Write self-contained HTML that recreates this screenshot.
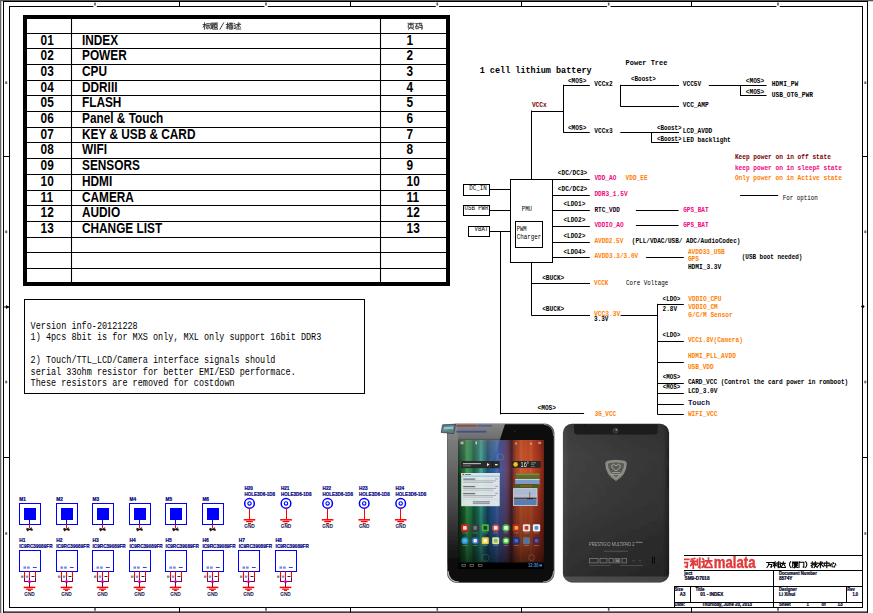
<!DOCTYPE html>
<html><head><meta charset="utf-8"><title>01 - INDEX</title>
<style>html,body{margin:0;padding:0;background:#fff;overflow:hidden}svg{display:block}</style>
</head><body>
<svg width="873" height="613" viewBox="0 0 873 613">
<defs>
<filter id="lblur" x="-5%" y="-20%" width="110%" height="140%"><feGaussianBlur stdDeviation="0.35"/></filter>
<filter id="pblur" x="-5%" y="-5%" width="110%" height="110%"><feGaussianBlur stdDeviation="0.45"/></filter>
<linearGradient id="wall" x1="0" y1="0" x2="1" y2="0">
<stop offset="0" stop-color="#0c2a16"/><stop offset="0.05" stop-color="#16602e"/><stop offset="0.13" stop-color="#2a9a4c"/>
<stop offset="0.2" stop-color="#1a6a50"/><stop offset="0.27" stop-color="#2aa08c"/><stop offset="0.34" stop-color="#1c5a78"/>
<stop offset="0.42" stop-color="#2f64ae"/><stop offset="0.5" stop-color="#4a5a9c"/><stop offset="0.56" stop-color="#6a4a78"/>
<stop offset="0.62" stop-color="#5a2c34"/><stop offset="0.68" stop-color="#b8482a"/><stop offset="0.78" stop-color="#d4582c"/>
<stop offset="0.88" stop-color="#c24426"/><stop offset="0.95" stop-color="#a83420"/><stop offset="1" stop-color="#7a2416"/></linearGradient>
<linearGradient id="walld" x1="0" y1="0" x2="0" y2="1">
<stop offset="0" stop-color="#000" stop-opacity="0.12"/><stop offset="0.25" stop-color="#000" stop-opacity="0.05"/><stop offset="0.6" stop-color="#000" stop-opacity="0.27"/><stop offset="0.85" stop-color="#000" stop-opacity="0.42"/><stop offset="1" stop-color="#000" stop-opacity="0.64"/></linearGradient>
<linearGradient id="glare" x1="0" y1="0" x2="0" y2="1">
<stop offset="0" stop-color="#8c8c8c" stop-opacity="0.95"/><stop offset="0.28" stop-color="#808080" stop-opacity="0.85"/><stop offset="0.34" stop-color="#909090" stop-opacity="0.34"/><stop offset="1" stop-color="#909090" stop-opacity="0.04"/></linearGradient>
<linearGradient id="bezl" x1="0" y1="0" x2="0" y2="1">
<stop offset="0" stop-color="#777"/><stop offset="0.5" stop-color="#555"/><stop offset="1" stop-color="#0b0b0b"/></linearGradient>
<linearGradient id="backg" x1="0" y1="0" x2="1" y2="0">
<stop offset="0" stop-color="#4e4e4e"/><stop offset="0.06" stop-color="#424242"/><stop offset="0.5" stop-color="#3b3b3b"/><stop offset="0.94" stop-color="#363636"/><stop offset="1" stop-color="#262626"/></linearGradient>
<linearGradient id="backv" x1="0" y1="0" x2="0" y2="1">
<stop offset="0" stop-color="#000" stop-opacity="0.12"/><stop offset="0.2" stop-color="#000" stop-opacity="0"/><stop offset="0.5" stop-color="#000" stop-opacity="0.07"/><stop offset="0.75" stop-color="#000" stop-opacity="0.22"/><stop offset="0.96" stop-color="#000" stop-opacity="0.3"/><stop offset="0.975" stop-color="#fff" stop-opacity="0.06"/><stop offset="1" stop-color="#fff" stop-opacity="0.1"/></linearGradient>
<clipPath id="fclip"><rect x="447.5" y="424" width="106.5" height="158.4" rx="9"/></clipPath>
<clipPath id="logoclip"><rect x="684" y="555.8" width="80" height="14"/></clipPath>
</defs>
<rect x="0.00" y="0.00" width="873.00" height="613.00" fill="#fff" stroke="none" stroke-width="1" />
<rect x="0.00" y="0.00" width="873.00" height="1.30" fill="#555" stroke="none" stroke-width="1" />
<rect x="0.00" y="0.00" width="1.30" height="613.00" fill="#666" stroke="none" stroke-width="1" />
<line x1="3.50" y1="1.00" x2="3.50" y2="613.00" stroke="#000" stroke-width="1" />
<line x1="3.20" y1="1.50" x2="868.00" y2="1.50" stroke="#000" stroke-width="1" />
<line x1="867.50" y1="1.00" x2="867.50" y2="613.00" stroke="#000" stroke-width="1" />
<rect x="9.5" y="6.5" width="853" height="601" fill="none" stroke="#000" stroke-width="1"/>
<line x1="3.00" y1="612.10" x2="868.00" y2="612.10" stroke="#000" stroke-width="1.3" />
<line x1="179.50" y1="1.60" x2="179.50" y2="6.30" stroke="#000" stroke-width="1" />
<line x1="179.50" y1="607.50" x2="179.50" y2="612.40" stroke="#000" stroke-width="1" />
<line x1="350.50" y1="1.60" x2="350.50" y2="6.30" stroke="#000" stroke-width="1" />
<line x1="350.50" y1="607.50" x2="350.50" y2="612.40" stroke="#000" stroke-width="1" />
<line x1="521.50" y1="1.60" x2="521.50" y2="6.30" stroke="#000" stroke-width="1" />
<line x1="521.50" y1="607.50" x2="521.50" y2="612.40" stroke="#000" stroke-width="1" />
<line x1="691.50" y1="1.60" x2="691.50" y2="6.30" stroke="#000" stroke-width="1" />
<line x1="691.50" y1="607.50" x2="691.50" y2="612.40" stroke="#000" stroke-width="1" />
<line x1="3.20" y1="156.50" x2="9.30" y2="156.50" stroke="#000" stroke-width="1" />
<line x1="862.70" y1="156.50" x2="867.80" y2="156.50" stroke="#000" stroke-width="1" />
<line x1="3.20" y1="457.50" x2="9.30" y2="457.50" stroke="#000" stroke-width="1" />
<line x1="862.70" y1="457.50" x2="867.80" y2="457.50" stroke="#000" stroke-width="1" />
<rect x="94.20" y="2.60" width="1.60" height="3.20" fill="#556" stroke="none" stroke-width="1" />
<rect x="93.40" y="5.60" width="3.40" height="1.40" fill="#fff" stroke="none" stroke-width="1" />
<rect x="94.20" y="607.80" width="1.60" height="3.00" fill="#556" stroke="none" stroke-width="1" />
<rect x="265.20" y="2.60" width="1.60" height="3.20" fill="#556" stroke="none" stroke-width="1" />
<rect x="264.40" y="5.60" width="3.40" height="1.40" fill="#fff" stroke="none" stroke-width="1" />
<rect x="265.20" y="607.80" width="1.60" height="3.00" fill="#556" stroke="none" stroke-width="1" />
<rect x="436.50" y="2.60" width="1.60" height="3.20" fill="#556" stroke="none" stroke-width="1" />
<rect x="435.70" y="5.60" width="3.40" height="1.40" fill="#fff" stroke="none" stroke-width="1" />
<rect x="436.50" y="607.80" width="1.60" height="3.00" fill="#556" stroke="none" stroke-width="1" />
<rect x="607.90" y="2.60" width="1.60" height="3.20" fill="#556" stroke="none" stroke-width="1" />
<rect x="607.10" y="5.60" width="3.40" height="1.40" fill="#fff" stroke="none" stroke-width="1" />
<rect x="607.90" y="607.80" width="1.60" height="3.00" fill="#556" stroke="none" stroke-width="1" />
<rect x="777.20" y="2.60" width="1.60" height="3.20" fill="#556" stroke="none" stroke-width="1" />
<rect x="776.40" y="5.60" width="3.40" height="1.40" fill="#fff" stroke="none" stroke-width="1" />
<rect x="777.20" y="607.80" width="1.60" height="3.00" fill="#556" stroke="none" stroke-width="1" />
<rect x="5.20" y="81.40" width="2.00" height="2.60" fill="#667" stroke="none" stroke-width="1" />
<rect x="864.30" y="81.40" width="2.00" height="2.60" fill="#667" stroke="none" stroke-width="1" />
<rect x="5.20" y="230.50" width="2.00" height="2.60" fill="#667" stroke="none" stroke-width="1" />
<rect x="864.30" y="230.50" width="2.00" height="2.60" fill="#667" stroke="none" stroke-width="1" />
<rect x="5.20" y="380.70" width="2.00" height="2.60" fill="#667" stroke="none" stroke-width="1" />
<rect x="864.30" y="380.70" width="2.00" height="2.60" fill="#667" stroke="none" stroke-width="1" />
<rect x="5.20" y="532.20" width="2.00" height="2.60" fill="#667" stroke="none" stroke-width="1" />
<rect x="864.30" y="532.20" width="2.00" height="2.60" fill="#667" stroke="none" stroke-width="1" />
<path d="M3.5 307.0 L9 307.0" stroke="#000" stroke-width="1" fill="none"/><path d="M6 305 L9.2 307 L6 309 Z" fill="#000"/>
<path d="M860.9 306.6 l1.9 -1.9 l1.9 1.9 l-1.9 1.9z" fill="#000"/>
<rect x="25.00" y="17.00" width="423.00" height="267.00" fill="none" stroke="#000" stroke-width="4" />
<line x1="26.00" y1="33.50" x2="447.00" y2="33.50" stroke="#000" stroke-width="1.1" />
<line x1="26.00" y1="48.50" x2="447.00" y2="48.50" stroke="#000" stroke-width="1.1" />
<line x1="26.00" y1="64.50" x2="447.00" y2="64.50" stroke="#000" stroke-width="1.1" />
<line x1="26.00" y1="80.50" x2="447.00" y2="80.50" stroke="#000" stroke-width="1.1" />
<line x1="26.00" y1="95.50" x2="447.00" y2="95.50" stroke="#000" stroke-width="1.1" />
<line x1="26.00" y1="111.50" x2="447.00" y2="111.50" stroke="#000" stroke-width="1.1" />
<line x1="26.00" y1="127.50" x2="447.00" y2="127.50" stroke="#000" stroke-width="1.1" />
<line x1="26.00" y1="142.50" x2="447.00" y2="142.50" stroke="#000" stroke-width="1.1" />
<line x1="26.00" y1="158.50" x2="447.00" y2="158.50" stroke="#000" stroke-width="1.1" />
<line x1="26.00" y1="174.50" x2="447.00" y2="174.50" stroke="#000" stroke-width="1.1" />
<line x1="26.00" y1="190.50" x2="447.00" y2="190.50" stroke="#000" stroke-width="1.1" />
<line x1="26.00" y1="205.50" x2="447.00" y2="205.50" stroke="#000" stroke-width="1.1" />
<line x1="26.00" y1="221.50" x2="447.00" y2="221.50" stroke="#000" stroke-width="1.1" />
<line x1="26.00" y1="237.50" x2="447.00" y2="237.50" stroke="#000" stroke-width="1.1" />
<line x1="26.00" y1="252.50" x2="447.00" y2="252.50" stroke="#000" stroke-width="1.1" />
<line x1="26.00" y1="268.50" x2="447.00" y2="268.50" stroke="#000" stroke-width="1.1" />
<line x1="71.50" y1="18.00" x2="71.50" y2="283.00" stroke="#000" stroke-width="1.1" />
<line x1="380.50" y1="18.00" x2="380.50" y2="283.00" stroke="#000" stroke-width="1.1" />
<text transform="translate(40.60,44.80) scale(0.845,1)" style="font-family:'Liberation Sans',sans-serif;font-size:14px;font-weight:bold" fill="#000" text-anchor="start"  xml:space="preserve">01</text>
<text transform="translate(82.00,44.80) scale(0.845,1)" style="font-family:'Liberation Sans',sans-serif;font-size:14px;font-weight:bold" fill="#000" text-anchor="start"  xml:space="preserve">INDEX</text>
<text transform="translate(406.60,44.80) scale(0.845,1)" style="font-family:'Liberation Sans',sans-serif;font-size:14px;font-weight:bold" fill="#000" text-anchor="start"  xml:space="preserve">1</text>
<text transform="translate(40.60,60.47) scale(0.845,1)" style="font-family:'Liberation Sans',sans-serif;font-size:14px;font-weight:bold" fill="#000" text-anchor="start"  xml:space="preserve">02</text>
<text transform="translate(82.00,60.47) scale(0.845,1)" style="font-family:'Liberation Sans',sans-serif;font-size:14px;font-weight:bold" fill="#000" text-anchor="start"  xml:space="preserve">POWER</text>
<text transform="translate(406.60,60.47) scale(0.845,1)" style="font-family:'Liberation Sans',sans-serif;font-size:14px;font-weight:bold" fill="#000" text-anchor="start"  xml:space="preserve">2</text>
<text transform="translate(40.60,76.14) scale(0.845,1)" style="font-family:'Liberation Sans',sans-serif;font-size:14px;font-weight:bold" fill="#000" text-anchor="start"  xml:space="preserve">03</text>
<text transform="translate(82.00,76.14) scale(0.845,1)" style="font-family:'Liberation Sans',sans-serif;font-size:14px;font-weight:bold" fill="#000" text-anchor="start"  xml:space="preserve">CPU</text>
<text transform="translate(406.60,76.14) scale(0.845,1)" style="font-family:'Liberation Sans',sans-serif;font-size:14px;font-weight:bold" fill="#000" text-anchor="start"  xml:space="preserve">3</text>
<text transform="translate(40.60,91.81) scale(0.845,1)" style="font-family:'Liberation Sans',sans-serif;font-size:14px;font-weight:bold" fill="#000" text-anchor="start"  xml:space="preserve">04</text>
<text transform="translate(82.00,91.81) scale(0.845,1)" style="font-family:'Liberation Sans',sans-serif;font-size:14px;font-weight:bold" fill="#000" text-anchor="start"  xml:space="preserve">DDRIII</text>
<text transform="translate(406.60,91.81) scale(0.845,1)" style="font-family:'Liberation Sans',sans-serif;font-size:14px;font-weight:bold" fill="#000" text-anchor="start"  xml:space="preserve">4</text>
<text transform="translate(40.60,107.48) scale(0.845,1)" style="font-family:'Liberation Sans',sans-serif;font-size:14px;font-weight:bold" fill="#000" text-anchor="start"  xml:space="preserve">05</text>
<text transform="translate(82.00,107.48) scale(0.845,1)" style="font-family:'Liberation Sans',sans-serif;font-size:14px;font-weight:bold" fill="#000" text-anchor="start"  xml:space="preserve">FLASH</text>
<text transform="translate(406.60,107.48) scale(0.845,1)" style="font-family:'Liberation Sans',sans-serif;font-size:14px;font-weight:bold" fill="#000" text-anchor="start"  xml:space="preserve">5</text>
<text transform="translate(40.60,123.15) scale(0.845,1)" style="font-family:'Liberation Sans',sans-serif;font-size:14px;font-weight:bold" fill="#000" text-anchor="start"  xml:space="preserve">06</text>
<text transform="translate(82.00,123.15) scale(0.845,1)" style="font-family:'Liberation Sans',sans-serif;font-size:14px;font-weight:bold" fill="#000" text-anchor="start"  xml:space="preserve">Panel &amp; Touch</text>
<text transform="translate(406.60,123.15) scale(0.845,1)" style="font-family:'Liberation Sans',sans-serif;font-size:14px;font-weight:bold" fill="#000" text-anchor="start"  xml:space="preserve">6</text>
<text transform="translate(40.60,138.82) scale(0.845,1)" style="font-family:'Liberation Sans',sans-serif;font-size:14px;font-weight:bold" fill="#000" text-anchor="start"  xml:space="preserve">07</text>
<text transform="translate(82.00,138.82) scale(0.845,1)" style="font-family:'Liberation Sans',sans-serif;font-size:14px;font-weight:bold" fill="#000" text-anchor="start"  xml:space="preserve">KEY &amp; USB &amp; CARD</text>
<text transform="translate(406.60,138.82) scale(0.845,1)" style="font-family:'Liberation Sans',sans-serif;font-size:14px;font-weight:bold" fill="#000" text-anchor="start"  xml:space="preserve">7</text>
<text transform="translate(40.60,154.49) scale(0.845,1)" style="font-family:'Liberation Sans',sans-serif;font-size:14px;font-weight:bold" fill="#000" text-anchor="start"  xml:space="preserve">08</text>
<text transform="translate(82.00,154.49) scale(0.845,1)" style="font-family:'Liberation Sans',sans-serif;font-size:14px;font-weight:bold" fill="#000" text-anchor="start"  xml:space="preserve">WIFI</text>
<text transform="translate(406.60,154.49) scale(0.845,1)" style="font-family:'Liberation Sans',sans-serif;font-size:14px;font-weight:bold" fill="#000" text-anchor="start"  xml:space="preserve">8</text>
<text transform="translate(40.60,170.16) scale(0.845,1)" style="font-family:'Liberation Sans',sans-serif;font-size:14px;font-weight:bold" fill="#000" text-anchor="start"  xml:space="preserve">09</text>
<text transform="translate(82.00,170.16) scale(0.845,1)" style="font-family:'Liberation Sans',sans-serif;font-size:14px;font-weight:bold" fill="#000" text-anchor="start"  xml:space="preserve">SENSORS</text>
<text transform="translate(406.60,170.16) scale(0.845,1)" style="font-family:'Liberation Sans',sans-serif;font-size:14px;font-weight:bold" fill="#000" text-anchor="start"  xml:space="preserve">9</text>
<text transform="translate(40.60,185.83) scale(0.845,1)" style="font-family:'Liberation Sans',sans-serif;font-size:14px;font-weight:bold" fill="#000" text-anchor="start"  xml:space="preserve">10</text>
<text transform="translate(82.00,185.83) scale(0.845,1)" style="font-family:'Liberation Sans',sans-serif;font-size:14px;font-weight:bold" fill="#000" text-anchor="start"  xml:space="preserve">HDMI</text>
<text transform="translate(406.60,185.83) scale(0.845,1)" style="font-family:'Liberation Sans',sans-serif;font-size:14px;font-weight:bold" fill="#000" text-anchor="start"  xml:space="preserve">10</text>
<text transform="translate(40.60,201.50) scale(0.845,1)" style="font-family:'Liberation Sans',sans-serif;font-size:14px;font-weight:bold" fill="#000" text-anchor="start"  xml:space="preserve">11</text>
<text transform="translate(82.00,201.50) scale(0.845,1)" style="font-family:'Liberation Sans',sans-serif;font-size:14px;font-weight:bold" fill="#000" text-anchor="start"  xml:space="preserve">CAMERA</text>
<text transform="translate(406.60,201.50) scale(0.845,1)" style="font-family:'Liberation Sans',sans-serif;font-size:14px;font-weight:bold" fill="#000" text-anchor="start"  xml:space="preserve">11</text>
<text transform="translate(40.60,217.17) scale(0.845,1)" style="font-family:'Liberation Sans',sans-serif;font-size:14px;font-weight:bold" fill="#000" text-anchor="start"  xml:space="preserve">12</text>
<text transform="translate(82.00,217.17) scale(0.845,1)" style="font-family:'Liberation Sans',sans-serif;font-size:14px;font-weight:bold" fill="#000" text-anchor="start"  xml:space="preserve">AUDIO</text>
<text transform="translate(406.60,217.17) scale(0.845,1)" style="font-family:'Liberation Sans',sans-serif;font-size:14px;font-weight:bold" fill="#000" text-anchor="start"  xml:space="preserve">12</text>
<text transform="translate(40.60,232.84) scale(0.845,1)" style="font-family:'Liberation Sans',sans-serif;font-size:14px;font-weight:bold" fill="#000" text-anchor="start"  xml:space="preserve">13</text>
<text transform="translate(82.00,232.84) scale(0.845,1)" style="font-family:'Liberation Sans',sans-serif;font-size:14px;font-weight:bold" fill="#000" text-anchor="start"  xml:space="preserve">CHANGE LIST</text>
<text transform="translate(406.60,232.84) scale(0.845,1)" style="font-family:'Liberation Sans',sans-serif;font-size:14px;font-weight:bold" fill="#000" text-anchor="start"  xml:space="preserve">13</text>
<rect x="24.50" y="299.50" width="340.00" height="94.00" fill="none" stroke="#000" stroke-width="1" />
<text x="30.60" y="329.20" style="font-family:'Liberation Mono',sans-serif;font-size:10px;font-weight:normal" fill="#000" text-anchor="start" textLength="107.10" lengthAdjust="spacingAndGlyphs"  xml:space="preserve">Version info-20121228</text>
<text x="30.60" y="340.30" style="font-family:'Liberation Mono',sans-serif;font-size:10px;font-weight:normal" fill="#000" text-anchor="start" textLength="290.70" lengthAdjust="spacingAndGlyphs"  xml:space="preserve">1) 4pcs 8bit is for MXS only, MXL only support 16bit DDR3</text>
<text x="30.60" y="363.00" style="font-family:'Liberation Mono',sans-serif;font-size:10px;font-weight:normal" fill="#000" text-anchor="start" textLength="244.80" lengthAdjust="spacingAndGlyphs"  xml:space="preserve">2) Touch/TTL_LCD/Camera interface signals should</text>
<text x="30.60" y="374.60" style="font-family:'Liberation Mono',sans-serif;font-size:10px;font-weight:normal" fill="#000" text-anchor="start" textLength="265.20" lengthAdjust="spacingAndGlyphs"  xml:space="preserve">serial 33ohm resistor for better EMI/ESD performace.</text>
<text x="30.60" y="386.40" style="font-family:'Liberation Mono',sans-serif;font-size:10px;font-weight:normal" fill="#000" text-anchor="start" textLength="204.00" lengthAdjust="spacingAndGlyphs"  xml:space="preserve">These resistors are removed for costdown</text>
<text x="479.70" y="72.80" style="font-family:'Liberation Mono',sans-serif;font-size:9.6px;font-weight:bold" fill="#000" text-anchor="start" textLength="111.98" lengthAdjust="spacingAndGlyphs"  xml:space="preserve">1 cell lithium battery</text>
<text x="625.60" y="65.00" style="font-family:'Liberation Mono',sans-serif;font-size:8px;font-weight:bold" fill="#000" text-anchor="start" textLength="41.80" lengthAdjust="spacingAndGlyphs"  xml:space="preserve">Power Tree</text>
<line x1="531.60" y1="111.50" x2="563.30" y2="111.50" stroke="#000" stroke-width="1" />
<line x1="531.50" y1="110.50" x2="531.50" y2="179.50" stroke="#000" stroke-width="1" />
<line x1="563.50" y1="84.80" x2="563.50" y2="132.70" stroke="#000" stroke-width="1" />
<line x1="563.30" y1="85.50" x2="589.80" y2="85.50" stroke="#000" stroke-width="1" />
<line x1="563.30" y1="132.50" x2="589.80" y2="132.50" stroke="#000" stroke-width="1" />
<text x="531.90" y="106.70" style="font-family:'Liberation Mono',sans-serif;font-size:7px;font-weight:bold" fill="#800000" text-anchor="start" textLength="14.76" lengthAdjust="spacingAndGlyphs"  xml:space="preserve">VCCx</text>
<text x="567.90" y="82.90" style="font-family:'Liberation Mono',sans-serif;font-size:7px;font-weight:bold" fill="#000" text-anchor="start" textLength="18.45" lengthAdjust="spacingAndGlyphs"  xml:space="preserve">&lt;MOS&gt;</text>
<text x="594.30" y="85.90" style="font-family:'Liberation Mono',sans-serif;font-size:7px;font-weight:bold" fill="#000" text-anchor="start" textLength="18.45" lengthAdjust="spacingAndGlyphs"  xml:space="preserve">VCCx2</text>
<text x="567.90" y="129.70" style="font-family:'Liberation Mono',sans-serif;font-size:7px;font-weight:bold" fill="#000" text-anchor="start" textLength="18.45" lengthAdjust="spacingAndGlyphs"  xml:space="preserve">&lt;MOS&gt;</text>
<text x="594.30" y="132.90" style="font-family:'Liberation Mono',sans-serif;font-size:7px;font-weight:bold" fill="#000" text-anchor="start" textLength="18.45" lengthAdjust="spacingAndGlyphs"  xml:space="preserve">VCCx3</text>
<line x1="620.50" y1="84.80" x2="620.50" y2="106.50" stroke="#000" stroke-width="1" />
<line x1="620.30" y1="85.50" x2="679.00" y2="85.50" stroke="#000" stroke-width="1" />
<line x1="620.30" y1="106.50" x2="679.00" y2="106.50" stroke="#000" stroke-width="1" />
<text x="631.00" y="80.90" style="font-family:'Liberation Mono',sans-serif;font-size:7px;font-weight:bold" fill="#000" text-anchor="start" textLength="24.85" lengthAdjust="spacingAndGlyphs"  xml:space="preserve">&lt;Boost&gt;</text>
<text x="682.80" y="85.90" style="font-family:'Liberation Mono',sans-serif;font-size:7px;font-weight:bold" fill="#000" text-anchor="start" textLength="18.45" lengthAdjust="spacingAndGlyphs"  xml:space="preserve">VCC5V</text>
<text x="682.80" y="106.70" style="font-family:'Liberation Mono',sans-serif;font-size:7px;font-weight:bold" fill="#000" text-anchor="start" textLength="25.83" lengthAdjust="spacingAndGlyphs"  xml:space="preserve">VCC_AMP</text>
<line x1="708.80" y1="85.50" x2="766.50" y2="85.50" stroke="#000" stroke-width="1" />
<line x1="740.50" y1="85.30" x2="740.50" y2="95.90" stroke="#000" stroke-width="1" />
<line x1="740.30" y1="95.50" x2="766.50" y2="95.50" stroke="#000" stroke-width="1" />
<text x="745.80" y="82.90" style="font-family:'Liberation Mono',sans-serif;font-size:7px;font-weight:bold" fill="#000" text-anchor="start" textLength="18.45" lengthAdjust="spacingAndGlyphs"  xml:space="preserve">&lt;MOS&gt;</text>
<text x="745.80" y="93.50" style="font-family:'Liberation Mono',sans-serif;font-size:7px;font-weight:bold" fill="#000" text-anchor="start" textLength="18.45" lengthAdjust="spacingAndGlyphs"  xml:space="preserve">&lt;MOS&gt;</text>
<text x="771.80" y="85.90" style="font-family:'Liberation Mono',sans-serif;font-size:7px;font-weight:bold" fill="#000" text-anchor="start" textLength="26.46" lengthAdjust="spacingAndGlyphs"  xml:space="preserve">HDMI_PW</text>
<text x="771.80" y="96.90" style="font-family:'Liberation Mono',sans-serif;font-size:7px;font-weight:bold" fill="#000" text-anchor="start" textLength="41.14" lengthAdjust="spacingAndGlyphs"  xml:space="preserve">USB_OTG_PWR</text>
<line x1="620.30" y1="132.50" x2="679.00" y2="132.50" stroke="#000" stroke-width="1" />
<line x1="651.50" y1="132.20" x2="651.50" y2="142.70" stroke="#000" stroke-width="1" />
<line x1="651.40" y1="142.50" x2="679.00" y2="142.50" stroke="#000" stroke-width="1" />
<text x="657.10" y="130.20" style="font-family:'Liberation Mono',sans-serif;font-size:7px;font-weight:bold" fill="#000" text-anchor="start" textLength="24.50" lengthAdjust="spacingAndGlyphs"  xml:space="preserve">&lt;Boost&gt;</text>
<text x="657.10" y="141.00" style="font-family:'Liberation Mono',sans-serif;font-size:7px;font-weight:bold" fill="#000" text-anchor="start" textLength="24.50" lengthAdjust="spacingAndGlyphs"  xml:space="preserve">&lt;Boost&gt;</text>
<text x="682.80" y="132.90" style="font-family:'Liberation Mono',sans-serif;font-size:7px;font-weight:bold" fill="#000" text-anchor="start" textLength="29.52" lengthAdjust="spacingAndGlyphs"  xml:space="preserve">LCD_AVDD</text>
<text x="682.80" y="141.80" style="font-family:'Liberation Mono',sans-serif;font-size:7px;font-weight:bold" fill="#000" text-anchor="start" textLength="47.97" lengthAdjust="spacingAndGlyphs"  xml:space="preserve">LED backlight</text>
<text x="734.90" y="159.20" style="font-family:'Liberation Mono',sans-serif;font-size:7px;font-weight:bold" fill="#800000" text-anchor="start" textLength="95.94" lengthAdjust="spacingAndGlyphs"  xml:space="preserve">Keep power on in off state</text>
<text x="734.90" y="170.20" style="font-family:'Liberation Mono',sans-serif;font-size:7px;font-weight:bold" fill="#f0057d" text-anchor="start" textLength="107.01" lengthAdjust="spacingAndGlyphs"  xml:space="preserve">keep power on in sleep# state</text>
<text x="734.90" y="180.30" style="font-family:'Liberation Mono',sans-serif;font-size:7px;font-weight:bold" fill="#ff8000" text-anchor="start" textLength="107.01" lengthAdjust="spacingAndGlyphs"  xml:space="preserve">Only power on in Active state</text>
<line x1="740.10" y1="195.50" x2="778.10" y2="195.50" stroke="#000" stroke-width="1" />
<text x="782.70" y="200.40" style="font-family:'Liberation Mono',sans-serif;font-size:7px;font-weight:normal" fill="#000" text-anchor="start" textLength="35.20" lengthAdjust="spacingAndGlyphs"  xml:space="preserve">For option</text>
<rect x="510.50" y="179.50" width="42.00" height="83.00" fill="none" stroke="#000" stroke-width="1" />
<rect x="515.50" y="221.50" width="27.00" height="26.00" fill="none" stroke="#000" stroke-width="1" />
<text x="521.80" y="210.50" style="font-family:'Liberation Mono',sans-serif;font-size:6.5px;font-weight:normal" fill="#000" text-anchor="start" textLength="10.20" lengthAdjust="spacingAndGlyphs"  xml:space="preserve">PMU</text>
<text x="516.70" y="231.20" style="font-family:'Liberation Mono',sans-serif;font-size:6.5px;font-weight:normal" fill="#000" text-anchor="start" textLength="9.90" lengthAdjust="spacingAndGlyphs"  xml:space="preserve">PWM</text>
<text x="516.70" y="238.50" style="font-family:'Liberation Mono',sans-serif;font-size:6.5px;font-weight:normal" fill="#000" text-anchor="start" textLength="24.50" lengthAdjust="spacingAndGlyphs"  xml:space="preserve">Charger</text>
<rect x="463.50" y="184.50" width="26.00" height="11.00" fill="none" stroke="#000" stroke-width="1" />
<line x1="489.50" y1="189.50" x2="510.40" y2="189.50" stroke="#000" stroke-width="1" />
<rect x="463.50" y="205.50" width="26.00" height="10.00" fill="none" stroke="#000" stroke-width="1" />
<line x1="489.50" y1="210.50" x2="510.40" y2="210.50" stroke="#000" stroke-width="1" />
<rect x="468.50" y="226.50" width="21.00" height="10.00" fill="none" stroke="#000" stroke-width="1" />
<line x1="489.50" y1="231.50" x2="510.40" y2="231.50" stroke="#000" stroke-width="1" />
<text x="469.30" y="189.60" style="font-family:'Liberation Mono',sans-serif;font-size:6.5px;font-weight:normal" fill="#000" text-anchor="start" textLength="17.50" lengthAdjust="spacingAndGlyphs"  xml:space="preserve">DC_IN</text>
<text x="464.60" y="210.30" style="font-family:'Liberation Mono',sans-serif;font-size:6.5px;font-weight:normal" fill="#000" text-anchor="start" textLength="23.80" lengthAdjust="spacingAndGlyphs"  xml:space="preserve">USB PWR</text>
<text x="474.60" y="231.30" style="font-family:'Liberation Mono',sans-serif;font-size:6.5px;font-weight:normal" fill="#000" text-anchor="start" textLength="13.60" lengthAdjust="spacingAndGlyphs"  xml:space="preserve">VBAT</text>
<line x1="500.50" y1="231.40" x2="500.50" y2="414.40" stroke="#000" stroke-width="1" />
<line x1="500.60" y1="413.50" x2="584.10" y2="413.50" stroke="#000" stroke-width="1" />
<text x="537.50" y="409.50" style="font-family:'Liberation Mono',sans-serif;font-size:7px;font-weight:bold" fill="#000" text-anchor="start" textLength="18.45" lengthAdjust="spacingAndGlyphs"  xml:space="preserve">&lt;MOS&gt;</text>
<text x="594.70" y="415.80" style="font-family:'Liberation Mono',sans-serif;font-size:7px;font-weight:bold" fill="#ff8000" text-anchor="start" textLength="21.30" lengthAdjust="spacingAndGlyphs"  xml:space="preserve">3G_VCC</text>
<line x1="552.50" y1="179.50" x2="589.80" y2="179.50" stroke="#000" stroke-width="1" />
<line x1="552.50" y1="195.50" x2="589.80" y2="195.50" stroke="#000" stroke-width="1" />
<line x1="552.50" y1="210.50" x2="589.80" y2="210.50" stroke="#000" stroke-width="1" />
<line x1="552.50" y1="226.50" x2="589.80" y2="226.50" stroke="#000" stroke-width="1" />
<line x1="552.50" y1="242.50" x2="589.80" y2="242.50" stroke="#000" stroke-width="1" />
<line x1="552.50" y1="257.50" x2="589.80" y2="257.50" stroke="#000" stroke-width="1" />
<text x="557.80" y="175.00" style="font-family:'Liberation Mono',sans-serif;font-size:7px;font-weight:bold" fill="#000" text-anchor="start" textLength="29.52" lengthAdjust="spacingAndGlyphs"  xml:space="preserve">&lt;DC/DC3&gt;</text>
<text x="557.80" y="190.90" style="font-family:'Liberation Mono',sans-serif;font-size:7px;font-weight:bold" fill="#000" text-anchor="start" textLength="29.52" lengthAdjust="spacingAndGlyphs"  xml:space="preserve">&lt;DC/DC2&gt;</text>
<text x="563.40" y="206.00" style="font-family:'Liberation Mono',sans-serif;font-size:7px;font-weight:bold" fill="#000" text-anchor="start" textLength="21.90" lengthAdjust="spacingAndGlyphs"  xml:space="preserve">&lt;LDO1&gt;</text>
<text x="563.40" y="221.60" style="font-family:'Liberation Mono',sans-serif;font-size:7px;font-weight:bold" fill="#000" text-anchor="start" textLength="21.90" lengthAdjust="spacingAndGlyphs"  xml:space="preserve">&lt;LDO2&gt;</text>
<text x="563.40" y="237.50" style="font-family:'Liberation Mono',sans-serif;font-size:7px;font-weight:bold" fill="#000" text-anchor="start" textLength="21.90" lengthAdjust="spacingAndGlyphs"  xml:space="preserve">&lt;LDO2&gt;</text>
<text x="563.40" y="253.60" style="font-family:'Liberation Mono',sans-serif;font-size:7px;font-weight:bold" fill="#000" text-anchor="start" textLength="21.90" lengthAdjust="spacingAndGlyphs"  xml:space="preserve">&lt;LDO4&gt;</text>
<text x="594.40" y="180.00" style="font-family:'Liberation Mono',sans-serif;font-size:7px;font-weight:bold" fill="#f0057d" text-anchor="start" textLength="21.90" lengthAdjust="spacingAndGlyphs"  xml:space="preserve">VDD_AO</text>
<text x="625.60" y="180.00" style="font-family:'Liberation Mono',sans-serif;font-size:7px;font-weight:bold" fill="#ff8000" text-anchor="start" textLength="22.14" lengthAdjust="spacingAndGlyphs"  xml:space="preserve">VDD_EE</text>
<text x="594.40" y="196.20" style="font-family:'Liberation Mono',sans-serif;font-size:7px;font-weight:bold" fill="#f0057d" text-anchor="start" textLength="33.21" lengthAdjust="spacingAndGlyphs"  xml:space="preserve">DDR3_1.5V</text>
<text x="594.40" y="212.00" style="font-family:'Liberation Mono',sans-serif;font-size:7px;font-weight:bold" fill="#200020" text-anchor="start" textLength="25.62" lengthAdjust="spacingAndGlyphs"  xml:space="preserve">RTC_VDD</text>
<text x="594.40" y="226.90" style="font-family:'Liberation Mono',sans-serif;font-size:7px;font-weight:bold" fill="#f0057d" text-anchor="start" textLength="29.28" lengthAdjust="spacingAndGlyphs"  xml:space="preserve">VDDIO_AO</text>
<text x="594.40" y="243.00" style="font-family:'Liberation Mono',sans-serif;font-size:7px;font-weight:bold" fill="#ff8000" text-anchor="start" textLength="28.96" lengthAdjust="spacingAndGlyphs"  xml:space="preserve">AVDD2.5V</text>
<text x="594.40" y="258.40" style="font-family:'Liberation Mono',sans-serif;font-size:7px;font-weight:bold" fill="#ff8000" text-anchor="start" textLength="43.80" lengthAdjust="spacingAndGlyphs"  xml:space="preserve">AVDD3.3/3.0V</text>
<line x1="635.90" y1="210.50" x2="678.60" y2="210.50" stroke="#000" stroke-width="1" />
<line x1="635.90" y1="225.50" x2="678.60" y2="225.50" stroke="#000" stroke-width="1" />
<text x="683.20" y="211.70" style="font-family:'Liberation Mono',sans-serif;font-size:7px;font-weight:bold" fill="#f0057d" text-anchor="start" textLength="25.34" lengthAdjust="spacingAndGlyphs"  xml:space="preserve">GPS_BAT</text>
<text x="683.20" y="226.80" style="font-family:'Liberation Mono',sans-serif;font-size:7px;font-weight:bold" fill="#f0057d" text-anchor="start" textLength="25.34" lengthAdjust="spacingAndGlyphs"  xml:space="preserve">GPS_BAT</text>
<text x="631.80" y="242.70" style="font-family:'Liberation Mono',sans-serif;font-size:7px;font-weight:bold" fill="#000" text-anchor="start" textLength="108.60" lengthAdjust="spacingAndGlyphs"  xml:space="preserve">(PLL/VDAC/USB/ ADC/AudioCodec)</text>
<line x1="646.10" y1="257.50" x2="683.80" y2="257.50" stroke="#000" stroke-width="1" />
<text x="687.90" y="254.00" style="font-family:'Liberation Mono',sans-serif;font-size:7px;font-weight:bold" fill="#ff8000" text-anchor="start" textLength="36.90" lengthAdjust="spacingAndGlyphs"  xml:space="preserve">AVDD33_USB</text>
<text x="687.90" y="261.40" style="font-family:'Liberation Mono',sans-serif;font-size:7px;font-weight:bold" fill="#ff8000" text-anchor="start" textLength="11.07" lengthAdjust="spacingAndGlyphs"  xml:space="preserve">GPS</text>
<text x="687.90" y="269.10" style="font-family:'Liberation Mono',sans-serif;font-size:7px;font-weight:bold" fill="#000" text-anchor="start" textLength="33.30" lengthAdjust="spacingAndGlyphs"  xml:space="preserve">HDMI_3.3V</text>
<text x="741.80" y="258.70" style="font-family:'Liberation Mono',sans-serif;font-size:7px;font-weight:bold" fill="#000" text-anchor="start" textLength="60.52" lengthAdjust="spacingAndGlyphs"  xml:space="preserve">(USB boot needed)</text>
<line x1="531.50" y1="262.20" x2="531.50" y2="315.70" stroke="#000" stroke-width="1" />
<line x1="531.60" y1="283.50" x2="590.00" y2="283.50" stroke="#000" stroke-width="1" />
<line x1="531.60" y1="315.50" x2="590.00" y2="315.50" stroke="#000" stroke-width="1" />
<text x="542.20" y="280.00" style="font-family:'Liberation Mono',sans-serif;font-size:7px;font-weight:bold" fill="#000" text-anchor="start" textLength="22.08" lengthAdjust="spacingAndGlyphs"  xml:space="preserve">&lt;BUCK&gt;</text>
<text x="542.20" y="310.70" style="font-family:'Liberation Mono',sans-serif;font-size:7px;font-weight:bold" fill="#000" text-anchor="start" textLength="22.08" lengthAdjust="spacingAndGlyphs"  xml:space="preserve">&lt;BUCK&gt;</text>
<text x="594.10" y="284.50" style="font-family:'Liberation Mono',sans-serif;font-size:7px;font-weight:bold" fill="#ff8000" text-anchor="start" textLength="14.32" lengthAdjust="spacingAndGlyphs"  xml:space="preserve">VCCK</text>
<text x="626.10" y="284.50" style="font-family:'Liberation Mono',sans-serif;font-size:6.5px;font-weight:normal" fill="#000" text-anchor="start" textLength="42.24" lengthAdjust="spacingAndGlyphs"  xml:space="preserve">Core Voltage</text>
<text x="594.10" y="315.60" style="font-family:'Liberation Mono',sans-serif;font-size:7px;font-weight:bold" fill="#ff8000" text-anchor="start" textLength="26.18" lengthAdjust="spacingAndGlyphs"  xml:space="preserve">VCC3.3V</text>
<text x="594.10" y="320.50" style="font-family:'Liberation Mono',sans-serif;font-size:6.5px;font-weight:bold" fill="#000" text-anchor="start" textLength="14.32" lengthAdjust="spacingAndGlyphs"  xml:space="preserve">3.3V</text>
<line x1="620.60" y1="315.50" x2="657.60" y2="315.50" stroke="#000" stroke-width="1" />
<line x1="657.50" y1="303.90" x2="657.50" y2="414.50" stroke="#000" stroke-width="1" />
<line x1="657.60" y1="304.50" x2="683.80" y2="304.50" stroke="#000" stroke-width="1" />
<line x1="657.60" y1="341.50" x2="683.80" y2="341.50" stroke="#000" stroke-width="1" />
<line x1="657.60" y1="362.50" x2="683.80" y2="362.50" stroke="#000" stroke-width="1" />
<line x1="657.60" y1="383.50" x2="683.80" y2="383.50" stroke="#000" stroke-width="1" />
<line x1="657.60" y1="393.50" x2="683.80" y2="393.50" stroke="#000" stroke-width="1" />
<line x1="657.60" y1="404.50" x2="683.80" y2="404.50" stroke="#000" stroke-width="1" />
<line x1="657.60" y1="414.50" x2="683.80" y2="414.50" stroke="#000" stroke-width="1" />
<text x="662.60" y="300.90" style="font-family:'Liberation Mono',sans-serif;font-size:7px;font-weight:bold" fill="#000" text-anchor="start" textLength="17.75" lengthAdjust="spacingAndGlyphs"  xml:space="preserve">&lt;LDO&gt;</text>
<text x="662.60" y="310.70" style="font-family:'Liberation Mono',sans-serif;font-size:6.5px;font-weight:bold" fill="#000" text-anchor="start" textLength="14.40" lengthAdjust="spacingAndGlyphs"  xml:space="preserve">2.8V</text>
<text x="688.30" y="300.90" style="font-family:'Liberation Mono',sans-serif;font-size:7px;font-weight:bold" fill="#ff8000" text-anchor="start" textLength="33.21" lengthAdjust="spacingAndGlyphs"  xml:space="preserve">VDDIO_CPU</text>
<text x="688.30" y="309.00" style="font-family:'Liberation Mono',sans-serif;font-size:7px;font-weight:bold" fill="#ff8000" text-anchor="start" textLength="29.52" lengthAdjust="spacingAndGlyphs"  xml:space="preserve">VDDIO_CM</text>
<text x="688.30" y="317.00" style="font-family:'Liberation Mono',sans-serif;font-size:7px;font-weight:bold" fill="#ff8000" text-anchor="start" textLength="44.28" lengthAdjust="spacingAndGlyphs"  xml:space="preserve">G/C/M Sensor</text>
<text x="662.60" y="336.90" style="font-family:'Liberation Mono',sans-serif;font-size:7px;font-weight:bold" fill="#000" text-anchor="start" textLength="17.75" lengthAdjust="spacingAndGlyphs"  xml:space="preserve">&lt;LDO&gt;</text>
<text x="687.90" y="341.90" style="font-family:'Liberation Mono',sans-serif;font-size:7px;font-weight:bold" fill="#ff8000" text-anchor="start" textLength="54.90" lengthAdjust="spacingAndGlyphs"  xml:space="preserve">VCC1.8V(Camera)</text>
<text x="687.90" y="357.80" style="font-family:'Liberation Mono',sans-serif;font-size:7px;font-weight:bold" fill="#ff8000" text-anchor="start" textLength="47.97" lengthAdjust="spacingAndGlyphs"  xml:space="preserve">HDMI_PLL_AVDD</text>
<text x="687.90" y="368.60" style="font-family:'Liberation Mono',sans-serif;font-size:7px;font-weight:bold" fill="#ff8000" text-anchor="start" textLength="25.83" lengthAdjust="spacingAndGlyphs"  xml:space="preserve">USB_VDD</text>
<text x="662.70" y="378.70" style="font-family:'Liberation Mono',sans-serif;font-size:7px;font-weight:bold" fill="#000" text-anchor="start" textLength="17.60" lengthAdjust="spacingAndGlyphs"  xml:space="preserve">&lt;MOS&gt;</text>
<text x="662.70" y="388.50" style="font-family:'Liberation Mono',sans-serif;font-size:7px;font-weight:bold" fill="#000" text-anchor="start" textLength="17.60" lengthAdjust="spacingAndGlyphs"  xml:space="preserve">&lt;MOS&gt;</text>
<text x="687.90" y="383.80" style="font-family:'Liberation Mono',sans-serif;font-size:7px;font-weight:bold" fill="#000" text-anchor="start" textLength="160.29" lengthAdjust="spacingAndGlyphs"  xml:space="preserve">CARD_VCC (Control the card power in romboot)</text>
<text x="687.90" y="392.80" style="font-family:'Liberation Mono',sans-serif;font-size:7px;font-weight:bold" fill="#000" text-anchor="start" textLength="29.60" lengthAdjust="spacingAndGlyphs"  xml:space="preserve">LCD_3.0V</text>
<text x="687.90" y="404.90" style="font-family:'Liberation Mono',sans-serif;font-size:7.5px;font-weight:bold" fill="#101040" text-anchor="start" textLength="22.00" lengthAdjust="spacingAndGlyphs"  xml:space="preserve">Touch</text>
<text x="687.90" y="415.80" style="font-family:'Liberation Mono',sans-serif;font-size:7px;font-weight:bold" fill="#ff8000" text-anchor="start" textLength="29.60" lengthAdjust="spacingAndGlyphs"  xml:space="preserve">WIFI_VCC</text>
<text x="19.30" y="501.10" style="font-family:'Liberation Sans',sans-serif;font-size:5.2px;font-weight:bold" fill="#000080" text-anchor="start" textLength="6.60" lengthAdjust="spacingAndGlyphs" stroke="#000080" stroke-width="0.2" xml:space="preserve">M1</text>
<rect x="19.50" y="503.50" width="21.00" height="21.00" fill="none" stroke="#0000ff" stroke-width="1" />
<rect x="24.00" y="508.00" width="12.00" height="12.00" fill="#0000ff" stroke="none" stroke-width="1" />
<line x1="29.50" y1="520.00" x2="29.50" y2="524.50" stroke="#0000ff" stroke-width="1" />
<line x1="29.50" y1="524.50" x2="29.50" y2="528.00" stroke="#ff0000" stroke-width="1" />
<path d="M26.50 528.20 L32.50 530.60 M32.10 527.80 L26.90 531.00 M26.30 529.4 L32.70 529.4" stroke="#2a1408" stroke-width="1.05" fill="none"/>
<text x="56.30" y="501.10" style="font-family:'Liberation Sans',sans-serif;font-size:5.2px;font-weight:bold" fill="#000080" text-anchor="start" textLength="6.60" lengthAdjust="spacingAndGlyphs" stroke="#000080" stroke-width="0.2" xml:space="preserve">M2</text>
<rect x="56.50" y="503.50" width="21.00" height="21.00" fill="none" stroke="#0000ff" stroke-width="1" />
<rect x="61.00" y="508.00" width="12.00" height="12.00" fill="#0000ff" stroke="none" stroke-width="1" />
<line x1="66.50" y1="520.00" x2="66.50" y2="524.50" stroke="#0000ff" stroke-width="1" />
<line x1="66.50" y1="524.50" x2="66.50" y2="528.00" stroke="#ff0000" stroke-width="1" />
<path d="M63.50 528.20 L69.50 530.60 M69.10 527.80 L63.90 531.00 M63.30 529.4 L69.70 529.4" stroke="#2a1408" stroke-width="1.05" fill="none"/>
<text x="92.50" y="501.10" style="font-family:'Liberation Sans',sans-serif;font-size:5.2px;font-weight:bold" fill="#000080" text-anchor="start" textLength="6.60" lengthAdjust="spacingAndGlyphs" stroke="#000080" stroke-width="0.2" xml:space="preserve">M3</text>
<rect x="92.50" y="503.50" width="21.00" height="21.00" fill="none" stroke="#0000ff" stroke-width="1" />
<rect x="97.00" y="508.00" width="12.00" height="12.00" fill="#0000ff" stroke="none" stroke-width="1" />
<line x1="102.50" y1="520.00" x2="102.50" y2="524.50" stroke="#0000ff" stroke-width="1" />
<line x1="102.50" y1="524.50" x2="102.50" y2="528.00" stroke="#ff0000" stroke-width="1" />
<path d="M99.50 528.20 L105.50 530.60 M105.10 527.80 L99.90 531.00 M99.30 529.4 L105.70 529.4" stroke="#2a1408" stroke-width="1.05" fill="none"/>
<text x="129.50" y="501.10" style="font-family:'Liberation Sans',sans-serif;font-size:5.2px;font-weight:bold" fill="#000080" text-anchor="start" textLength="6.60" lengthAdjust="spacingAndGlyphs" stroke="#000080" stroke-width="0.2" xml:space="preserve">M4</text>
<rect x="129.50" y="503.50" width="21.00" height="21.00" fill="none" stroke="#0000ff" stroke-width="1" />
<rect x="134.00" y="508.00" width="12.00" height="12.00" fill="#0000ff" stroke="none" stroke-width="1" />
<line x1="139.50" y1="520.00" x2="139.50" y2="524.50" stroke="#0000ff" stroke-width="1" />
<line x1="139.50" y1="524.50" x2="139.50" y2="528.00" stroke="#ff0000" stroke-width="1" />
<path d="M136.50 528.20 L142.50 530.60 M142.10 527.80 L136.90 531.00 M136.30 529.4 L142.70 529.4" stroke="#2a1408" stroke-width="1.05" fill="none"/>
<text x="165.60" y="501.10" style="font-family:'Liberation Sans',sans-serif;font-size:5.2px;font-weight:bold" fill="#000080" text-anchor="start" textLength="6.60" lengthAdjust="spacingAndGlyphs" stroke="#000080" stroke-width="0.2" xml:space="preserve">M5</text>
<rect x="165.50" y="503.50" width="21.00" height="21.00" fill="none" stroke="#0000ff" stroke-width="1" />
<rect x="170.00" y="508.00" width="12.00" height="12.00" fill="#0000ff" stroke="none" stroke-width="1" />
<line x1="175.50" y1="520.00" x2="175.50" y2="524.50" stroke="#0000ff" stroke-width="1" />
<line x1="175.50" y1="524.50" x2="175.50" y2="528.00" stroke="#ff0000" stroke-width="1" />
<path d="M172.50 528.20 L178.50 530.60 M178.10 527.80 L172.90 531.00 M172.30 529.4 L178.70 529.4" stroke="#2a1408" stroke-width="1.05" fill="none"/>
<text x="202.40" y="501.10" style="font-family:'Liberation Sans',sans-serif;font-size:5.2px;font-weight:bold" fill="#000080" text-anchor="start" textLength="6.60" lengthAdjust="spacingAndGlyphs" stroke="#000080" stroke-width="0.2" xml:space="preserve">M6</text>
<rect x="202.50" y="503.50" width="21.00" height="21.00" fill="none" stroke="#0000ff" stroke-width="1" />
<rect x="207.00" y="508.00" width="12.00" height="12.00" fill="#0000ff" stroke="none" stroke-width="1" />
<line x1="212.50" y1="520.00" x2="212.50" y2="524.50" stroke="#0000ff" stroke-width="1" />
<line x1="212.50" y1="524.50" x2="212.50" y2="528.00" stroke="#ff0000" stroke-width="1" />
<path d="M209.50 528.20 L215.50 530.60 M215.10 527.80 L209.90 531.00 M209.30 529.4 L215.70 529.4" stroke="#2a1408" stroke-width="1.05" fill="none"/>
<text x="19.30" y="541.90" style="font-family:'Liberation Sans',sans-serif;font-size:5.2px;font-weight:bold" fill="#000080" text-anchor="start" textLength="6.20" lengthAdjust="spacingAndGlyphs" stroke="#000080" stroke-width="0.2" xml:space="preserve">H1</text>
<text x="19.30" y="547.90" style="font-family:'Liberation Sans',sans-serif;font-size:5.2px;font-weight:bold" fill="#000080" text-anchor="start" textLength="33.20" lengthAdjust="spacingAndGlyphs" stroke="#000080" stroke-width="0.2" xml:space="preserve">IC9RC39089FR</text>
<rect x="19.50" y="550.50" width="21.00" height="21.00" fill="none" stroke="#0000ff" stroke-width="1" />
<rect x="23.50" y="566.50" width="2.60" height="2.20" fill="#4a5ad0" stroke="none" stroke-width="1" opacity="0.75"/>
<rect x="27.10" y="566.50" width="2.60" height="2.20" fill="#4a5ad0" stroke="none" stroke-width="1" opacity="0.75"/>
<line x1="32.90" y1="567.50" x2="36.70" y2="567.50" stroke="#2030a0" stroke-width="0.9" />
<line x1="24.50" y1="571.40" x2="24.50" y2="577.20" stroke="#ff0000" stroke-width="1.1" />
<line x1="24.50" y1="577.20" x2="24.50" y2="581.90" stroke="#800040" stroke-width="1" />
<line x1="29.50" y1="571.40" x2="29.50" y2="577.20" stroke="#ff0000" stroke-width="1.1" />
<line x1="29.50" y1="577.20" x2="29.50" y2="581.90" stroke="#800040" stroke-width="1" />
<line x1="35.50" y1="571.40" x2="35.50" y2="577.20" stroke="#ff0000" stroke-width="1.1" />
<line x1="35.50" y1="577.20" x2="35.50" y2="581.90" stroke="#800040" stroke-width="1" />
<rect x="20.90" y="575.60" width="2.60" height="2.20" fill="#7a6a50" stroke="none" stroke-width="1" opacity="0.8"/>
<rect x="25.80" y="575.60" width="2.50" height="2.20" fill="#4a5ad0" stroke="none" stroke-width="1" opacity="0.7"/>
<line x1="31.50" y1="576.50" x2="34.50" y2="576.50" stroke="#101010" stroke-width="0.9" />
<line x1="24.60" y1="581.50" x2="35.30" y2="581.50" stroke="#800040" stroke-width="1" />
<circle cx="29.50" cy="581.6" r="1.5" fill="#ff00ff"/>
<line x1="29.50" y1="581.40" x2="29.50" y2="587.20" stroke="#800040" stroke-width="1" />
<line x1="23.70" y1="587.40" x2="35.30" y2="587.40" stroke="#ff0000" stroke-width="1.5" />
<line x1="26.10" y1="589.20" x2="32.90" y2="589.20" stroke="#ff0000" stroke-width="1.2" />
<line x1="28.00" y1="590.50" x2="31.00" y2="590.50" stroke="#ff0000" stroke-width="1.0" />
<text x="29.50" y="595.60" style="font-family:'Liberation Sans',sans-serif;font-size:5.2px;font-weight:bold" fill="#141450" text-anchor="middle" textLength="10.60" lengthAdjust="spacingAndGlyphs"  xml:space="preserve">GND</text>
<text x="56.30" y="541.90" style="font-family:'Liberation Sans',sans-serif;font-size:5.2px;font-weight:bold" fill="#000080" text-anchor="start" textLength="6.20" lengthAdjust="spacingAndGlyphs" stroke="#000080" stroke-width="0.2" xml:space="preserve">H2</text>
<text x="56.30" y="547.90" style="font-family:'Liberation Sans',sans-serif;font-size:5.2px;font-weight:bold" fill="#000080" text-anchor="start" textLength="33.20" lengthAdjust="spacingAndGlyphs" stroke="#000080" stroke-width="0.2" xml:space="preserve">IC9RC39089FR</text>
<rect x="56.50" y="550.50" width="21.00" height="21.00" fill="none" stroke="#0000ff" stroke-width="1" />
<rect x="60.50" y="566.50" width="2.60" height="2.20" fill="#4a5ad0" stroke="none" stroke-width="1" opacity="0.75"/>
<rect x="64.10" y="566.50" width="2.60" height="2.20" fill="#4a5ad0" stroke="none" stroke-width="1" opacity="0.75"/>
<line x1="69.90" y1="567.50" x2="73.70" y2="567.50" stroke="#2030a0" stroke-width="0.9" />
<line x1="61.50" y1="571.40" x2="61.50" y2="577.20" stroke="#ff0000" stroke-width="1.1" />
<line x1="61.50" y1="577.20" x2="61.50" y2="581.90" stroke="#800040" stroke-width="1" />
<line x1="66.50" y1="571.40" x2="66.50" y2="577.20" stroke="#ff0000" stroke-width="1.1" />
<line x1="66.50" y1="577.20" x2="66.50" y2="581.90" stroke="#800040" stroke-width="1" />
<line x1="72.50" y1="571.40" x2="72.50" y2="577.20" stroke="#ff0000" stroke-width="1.1" />
<line x1="72.50" y1="577.20" x2="72.50" y2="581.90" stroke="#800040" stroke-width="1" />
<rect x="57.90" y="575.60" width="2.60" height="2.20" fill="#7a6a50" stroke="none" stroke-width="1" opacity="0.8"/>
<rect x="62.80" y="575.60" width="2.50" height="2.20" fill="#4a5ad0" stroke="none" stroke-width="1" opacity="0.7"/>
<line x1="68.50" y1="576.50" x2="71.50" y2="576.50" stroke="#101010" stroke-width="0.9" />
<line x1="61.60" y1="581.50" x2="72.30" y2="581.50" stroke="#800040" stroke-width="1" />
<circle cx="66.50" cy="581.6" r="1.5" fill="#ff00ff"/>
<line x1="66.50" y1="581.40" x2="66.50" y2="587.20" stroke="#800040" stroke-width="1" />
<line x1="60.70" y1="587.40" x2="72.30" y2="587.40" stroke="#ff0000" stroke-width="1.5" />
<line x1="63.10" y1="589.20" x2="69.90" y2="589.20" stroke="#ff0000" stroke-width="1.2" />
<line x1="65.00" y1="590.50" x2="68.00" y2="590.50" stroke="#ff0000" stroke-width="1.0" />
<text x="66.50" y="595.60" style="font-family:'Liberation Sans',sans-serif;font-size:5.2px;font-weight:bold" fill="#141450" text-anchor="middle" textLength="10.60" lengthAdjust="spacingAndGlyphs"  xml:space="preserve">GND</text>
<text x="92.50" y="541.90" style="font-family:'Liberation Sans',sans-serif;font-size:5.2px;font-weight:bold" fill="#000080" text-anchor="start" textLength="6.20" lengthAdjust="spacingAndGlyphs" stroke="#000080" stroke-width="0.2" xml:space="preserve">H3</text>
<text x="92.50" y="547.90" style="font-family:'Liberation Sans',sans-serif;font-size:5.2px;font-weight:bold" fill="#000080" text-anchor="start" textLength="33.20" lengthAdjust="spacingAndGlyphs" stroke="#000080" stroke-width="0.2" xml:space="preserve">IC9RC39089FR</text>
<rect x="92.50" y="550.50" width="21.00" height="21.00" fill="none" stroke="#0000ff" stroke-width="1" />
<rect x="96.50" y="566.50" width="2.60" height="2.20" fill="#4a5ad0" stroke="none" stroke-width="1" opacity="0.75"/>
<rect x="100.10" y="566.50" width="2.60" height="2.20" fill="#4a5ad0" stroke="none" stroke-width="1" opacity="0.75"/>
<line x1="105.90" y1="567.50" x2="109.70" y2="567.50" stroke="#2030a0" stroke-width="0.9" />
<line x1="97.50" y1="571.40" x2="97.50" y2="577.20" stroke="#ff0000" stroke-width="1.1" />
<line x1="97.50" y1="577.20" x2="97.50" y2="581.90" stroke="#800040" stroke-width="1" />
<line x1="102.50" y1="571.40" x2="102.50" y2="577.20" stroke="#ff0000" stroke-width="1.1" />
<line x1="102.50" y1="577.20" x2="102.50" y2="581.90" stroke="#800040" stroke-width="1" />
<line x1="108.50" y1="571.40" x2="108.50" y2="577.20" stroke="#ff0000" stroke-width="1.1" />
<line x1="108.50" y1="577.20" x2="108.50" y2="581.90" stroke="#800040" stroke-width="1" />
<rect x="93.90" y="575.60" width="2.60" height="2.20" fill="#7a6a50" stroke="none" stroke-width="1" opacity="0.8"/>
<rect x="98.80" y="575.60" width="2.50" height="2.20" fill="#4a5ad0" stroke="none" stroke-width="1" opacity="0.7"/>
<line x1="104.50" y1="576.50" x2="107.50" y2="576.50" stroke="#101010" stroke-width="0.9" />
<line x1="97.60" y1="581.50" x2="108.30" y2="581.50" stroke="#800040" stroke-width="1" />
<circle cx="102.50" cy="581.6" r="1.5" fill="#ff00ff"/>
<line x1="102.50" y1="581.40" x2="102.50" y2="587.20" stroke="#800040" stroke-width="1" />
<line x1="96.70" y1="587.40" x2="108.30" y2="587.40" stroke="#ff0000" stroke-width="1.5" />
<line x1="99.10" y1="589.20" x2="105.90" y2="589.20" stroke="#ff0000" stroke-width="1.2" />
<line x1="101.00" y1="590.50" x2="104.00" y2="590.50" stroke="#ff0000" stroke-width="1.0" />
<text x="102.50" y="595.60" style="font-family:'Liberation Sans',sans-serif;font-size:5.2px;font-weight:bold" fill="#141450" text-anchor="middle" textLength="10.60" lengthAdjust="spacingAndGlyphs"  xml:space="preserve">GND</text>
<text x="129.50" y="541.90" style="font-family:'Liberation Sans',sans-serif;font-size:5.2px;font-weight:bold" fill="#000080" text-anchor="start" textLength="6.20" lengthAdjust="spacingAndGlyphs" stroke="#000080" stroke-width="0.2" xml:space="preserve">H4</text>
<text x="129.50" y="547.90" style="font-family:'Liberation Sans',sans-serif;font-size:5.2px;font-weight:bold" fill="#000080" text-anchor="start" textLength="33.20" lengthAdjust="spacingAndGlyphs" stroke="#000080" stroke-width="0.2" xml:space="preserve">IC9RC39089FR</text>
<rect x="129.50" y="550.50" width="21.00" height="21.00" fill="none" stroke="#0000ff" stroke-width="1" />
<rect x="133.50" y="566.50" width="2.60" height="2.20" fill="#4a5ad0" stroke="none" stroke-width="1" opacity="0.75"/>
<rect x="137.10" y="566.50" width="2.60" height="2.20" fill="#4a5ad0" stroke="none" stroke-width="1" opacity="0.75"/>
<line x1="142.90" y1="567.50" x2="146.70" y2="567.50" stroke="#2030a0" stroke-width="0.9" />
<line x1="134.50" y1="571.40" x2="134.50" y2="577.20" stroke="#ff0000" stroke-width="1.1" />
<line x1="134.50" y1="577.20" x2="134.50" y2="581.90" stroke="#800040" stroke-width="1" />
<line x1="139.50" y1="571.40" x2="139.50" y2="577.20" stroke="#ff0000" stroke-width="1.1" />
<line x1="139.50" y1="577.20" x2="139.50" y2="581.90" stroke="#800040" stroke-width="1" />
<line x1="145.50" y1="571.40" x2="145.50" y2="577.20" stroke="#ff0000" stroke-width="1.1" />
<line x1="145.50" y1="577.20" x2="145.50" y2="581.90" stroke="#800040" stroke-width="1" />
<rect x="130.90" y="575.60" width="2.60" height="2.20" fill="#7a6a50" stroke="none" stroke-width="1" opacity="0.8"/>
<rect x="135.80" y="575.60" width="2.50" height="2.20" fill="#4a5ad0" stroke="none" stroke-width="1" opacity="0.7"/>
<line x1="141.50" y1="576.50" x2="144.50" y2="576.50" stroke="#101010" stroke-width="0.9" />
<line x1="134.60" y1="581.50" x2="145.30" y2="581.50" stroke="#800040" stroke-width="1" />
<circle cx="139.50" cy="581.6" r="1.5" fill="#ff00ff"/>
<line x1="139.50" y1="581.40" x2="139.50" y2="587.20" stroke="#800040" stroke-width="1" />
<line x1="133.70" y1="587.40" x2="145.30" y2="587.40" stroke="#ff0000" stroke-width="1.5" />
<line x1="136.10" y1="589.20" x2="142.90" y2="589.20" stroke="#ff0000" stroke-width="1.2" />
<line x1="138.00" y1="590.50" x2="141.00" y2="590.50" stroke="#ff0000" stroke-width="1.0" />
<text x="139.50" y="595.60" style="font-family:'Liberation Sans',sans-serif;font-size:5.2px;font-weight:bold" fill="#141450" text-anchor="middle" textLength="10.60" lengthAdjust="spacingAndGlyphs"  xml:space="preserve">GND</text>
<text x="165.60" y="541.90" style="font-family:'Liberation Sans',sans-serif;font-size:5.2px;font-weight:bold" fill="#000080" text-anchor="start" textLength="6.20" lengthAdjust="spacingAndGlyphs" stroke="#000080" stroke-width="0.2" xml:space="preserve">H5</text>
<text x="165.60" y="547.90" style="font-family:'Liberation Sans',sans-serif;font-size:5.2px;font-weight:bold" fill="#000080" text-anchor="start" textLength="33.20" lengthAdjust="spacingAndGlyphs" stroke="#000080" stroke-width="0.2" xml:space="preserve">IC9RC39089FR</text>
<rect x="165.50" y="550.50" width="21.00" height="21.00" fill="none" stroke="#0000ff" stroke-width="1" />
<rect x="169.50" y="566.50" width="2.60" height="2.20" fill="#4a5ad0" stroke="none" stroke-width="1" opacity="0.75"/>
<rect x="173.10" y="566.50" width="2.60" height="2.20" fill="#4a5ad0" stroke="none" stroke-width="1" opacity="0.75"/>
<line x1="178.90" y1="567.50" x2="182.70" y2="567.50" stroke="#2030a0" stroke-width="0.9" />
<line x1="170.50" y1="571.40" x2="170.50" y2="577.20" stroke="#ff0000" stroke-width="1.1" />
<line x1="170.50" y1="577.20" x2="170.50" y2="581.90" stroke="#800040" stroke-width="1" />
<line x1="175.50" y1="571.40" x2="175.50" y2="577.20" stroke="#ff0000" stroke-width="1.1" />
<line x1="175.50" y1="577.20" x2="175.50" y2="581.90" stroke="#800040" stroke-width="1" />
<line x1="181.50" y1="571.40" x2="181.50" y2="577.20" stroke="#ff0000" stroke-width="1.1" />
<line x1="181.50" y1="577.20" x2="181.50" y2="581.90" stroke="#800040" stroke-width="1" />
<rect x="166.90" y="575.60" width="2.60" height="2.20" fill="#7a6a50" stroke="none" stroke-width="1" opacity="0.8"/>
<rect x="171.80" y="575.60" width="2.50" height="2.20" fill="#4a5ad0" stroke="none" stroke-width="1" opacity="0.7"/>
<line x1="177.50" y1="576.50" x2="180.50" y2="576.50" stroke="#101010" stroke-width="0.9" />
<line x1="170.60" y1="581.50" x2="181.30" y2="581.50" stroke="#800040" stroke-width="1" />
<circle cx="175.50" cy="581.6" r="1.5" fill="#ff00ff"/>
<line x1="175.50" y1="581.40" x2="175.50" y2="587.20" stroke="#800040" stroke-width="1" />
<line x1="169.70" y1="587.40" x2="181.30" y2="587.40" stroke="#ff0000" stroke-width="1.5" />
<line x1="172.10" y1="589.20" x2="178.90" y2="589.20" stroke="#ff0000" stroke-width="1.2" />
<line x1="174.00" y1="590.50" x2="177.00" y2="590.50" stroke="#ff0000" stroke-width="1.0" />
<text x="175.50" y="595.60" style="font-family:'Liberation Sans',sans-serif;font-size:5.2px;font-weight:bold" fill="#141450" text-anchor="middle" textLength="10.60" lengthAdjust="spacingAndGlyphs"  xml:space="preserve">GND</text>
<text x="202.40" y="541.90" style="font-family:'Liberation Sans',sans-serif;font-size:5.2px;font-weight:bold" fill="#000080" text-anchor="start" textLength="6.20" lengthAdjust="spacingAndGlyphs" stroke="#000080" stroke-width="0.2" xml:space="preserve">H6</text>
<text x="202.40" y="547.90" style="font-family:'Liberation Sans',sans-serif;font-size:5.2px;font-weight:bold" fill="#000080" text-anchor="start" textLength="33.20" lengthAdjust="spacingAndGlyphs" stroke="#000080" stroke-width="0.2" xml:space="preserve">IC9RC39089FR</text>
<rect x="202.50" y="550.50" width="21.00" height="21.00" fill="none" stroke="#0000ff" stroke-width="1" />
<rect x="206.50" y="566.50" width="2.60" height="2.20" fill="#4a5ad0" stroke="none" stroke-width="1" opacity="0.75"/>
<rect x="210.10" y="566.50" width="2.60" height="2.20" fill="#4a5ad0" stroke="none" stroke-width="1" opacity="0.75"/>
<line x1="215.90" y1="567.50" x2="219.70" y2="567.50" stroke="#2030a0" stroke-width="0.9" />
<line x1="207.50" y1="571.40" x2="207.50" y2="577.20" stroke="#ff0000" stroke-width="1.1" />
<line x1="207.50" y1="577.20" x2="207.50" y2="581.90" stroke="#800040" stroke-width="1" />
<line x1="212.50" y1="571.40" x2="212.50" y2="577.20" stroke="#ff0000" stroke-width="1.1" />
<line x1="212.50" y1="577.20" x2="212.50" y2="581.90" stroke="#800040" stroke-width="1" />
<line x1="218.50" y1="571.40" x2="218.50" y2="577.20" stroke="#ff0000" stroke-width="1.1" />
<line x1="218.50" y1="577.20" x2="218.50" y2="581.90" stroke="#800040" stroke-width="1" />
<rect x="203.90" y="575.60" width="2.60" height="2.20" fill="#7a6a50" stroke="none" stroke-width="1" opacity="0.8"/>
<rect x="208.80" y="575.60" width="2.50" height="2.20" fill="#4a5ad0" stroke="none" stroke-width="1" opacity="0.7"/>
<line x1="214.50" y1="576.50" x2="217.50" y2="576.50" stroke="#101010" stroke-width="0.9" />
<line x1="207.60" y1="581.50" x2="218.30" y2="581.50" stroke="#800040" stroke-width="1" />
<circle cx="212.50" cy="581.6" r="1.5" fill="#ff00ff"/>
<line x1="212.50" y1="581.40" x2="212.50" y2="587.20" stroke="#800040" stroke-width="1" />
<line x1="206.70" y1="587.40" x2="218.30" y2="587.40" stroke="#ff0000" stroke-width="1.5" />
<line x1="209.10" y1="589.20" x2="215.90" y2="589.20" stroke="#ff0000" stroke-width="1.2" />
<line x1="211.00" y1="590.50" x2="214.00" y2="590.50" stroke="#ff0000" stroke-width="1.0" />
<text x="212.50" y="595.60" style="font-family:'Liberation Sans',sans-serif;font-size:5.2px;font-weight:bold" fill="#141450" text-anchor="middle" textLength="10.60" lengthAdjust="spacingAndGlyphs"  xml:space="preserve">GND</text>
<text x="238.80" y="541.90" style="font-family:'Liberation Sans',sans-serif;font-size:5.2px;font-weight:bold" fill="#000080" text-anchor="start" textLength="6.20" lengthAdjust="spacingAndGlyphs" stroke="#000080" stroke-width="0.2" xml:space="preserve">H7</text>
<text x="238.80" y="547.90" style="font-family:'Liberation Sans',sans-serif;font-size:5.2px;font-weight:bold" fill="#000080" text-anchor="start" textLength="33.20" lengthAdjust="spacingAndGlyphs" stroke="#000080" stroke-width="0.2" xml:space="preserve">IC9RC39089FR</text>
<rect x="238.50" y="550.50" width="21.00" height="21.00" fill="none" stroke="#0000ff" stroke-width="1" />
<rect x="242.50" y="566.50" width="2.60" height="2.20" fill="#4a5ad0" stroke="none" stroke-width="1" opacity="0.75"/>
<rect x="246.10" y="566.50" width="2.60" height="2.20" fill="#4a5ad0" stroke="none" stroke-width="1" opacity="0.75"/>
<line x1="251.90" y1="567.50" x2="255.70" y2="567.50" stroke="#2030a0" stroke-width="0.9" />
<line x1="243.50" y1="571.40" x2="243.50" y2="577.20" stroke="#ff0000" stroke-width="1.1" />
<line x1="243.50" y1="577.20" x2="243.50" y2="581.90" stroke="#800040" stroke-width="1" />
<line x1="248.50" y1="571.40" x2="248.50" y2="577.20" stroke="#ff0000" stroke-width="1.1" />
<line x1="248.50" y1="577.20" x2="248.50" y2="581.90" stroke="#800040" stroke-width="1" />
<line x1="254.50" y1="571.40" x2="254.50" y2="577.20" stroke="#ff0000" stroke-width="1.1" />
<line x1="254.50" y1="577.20" x2="254.50" y2="581.90" stroke="#800040" stroke-width="1" />
<rect x="239.90" y="575.60" width="2.60" height="2.20" fill="#7a6a50" stroke="none" stroke-width="1" opacity="0.8"/>
<rect x="244.80" y="575.60" width="2.50" height="2.20" fill="#4a5ad0" stroke="none" stroke-width="1" opacity="0.7"/>
<line x1="250.50" y1="576.50" x2="253.50" y2="576.50" stroke="#101010" stroke-width="0.9" />
<line x1="243.60" y1="581.50" x2="254.30" y2="581.50" stroke="#800040" stroke-width="1" />
<circle cx="248.50" cy="581.6" r="1.5" fill="#ff00ff"/>
<line x1="248.50" y1="581.40" x2="248.50" y2="587.20" stroke="#800040" stroke-width="1" />
<line x1="242.70" y1="587.40" x2="254.30" y2="587.40" stroke="#ff0000" stroke-width="1.5" />
<line x1="245.10" y1="589.20" x2="251.90" y2="589.20" stroke="#ff0000" stroke-width="1.2" />
<line x1="247.00" y1="590.50" x2="250.00" y2="590.50" stroke="#ff0000" stroke-width="1.0" />
<text x="248.50" y="595.60" style="font-family:'Liberation Sans',sans-serif;font-size:5.2px;font-weight:bold" fill="#141450" text-anchor="middle" textLength="10.60" lengthAdjust="spacingAndGlyphs"  xml:space="preserve">GND</text>
<text x="275.60" y="541.90" style="font-family:'Liberation Sans',sans-serif;font-size:5.2px;font-weight:bold" fill="#000080" text-anchor="start" textLength="6.20" lengthAdjust="spacingAndGlyphs" stroke="#000080" stroke-width="0.2" xml:space="preserve">H8</text>
<text x="275.60" y="547.90" style="font-family:'Liberation Sans',sans-serif;font-size:5.2px;font-weight:bold" fill="#000080" text-anchor="start" textLength="33.20" lengthAdjust="spacingAndGlyphs" stroke="#000080" stroke-width="0.2" xml:space="preserve">IC9RC39089FR</text>
<rect x="275.50" y="550.50" width="21.00" height="21.00" fill="none" stroke="#0000ff" stroke-width="1" />
<rect x="279.50" y="566.50" width="2.60" height="2.20" fill="#4a5ad0" stroke="none" stroke-width="1" opacity="0.75"/>
<rect x="283.10" y="566.50" width="2.60" height="2.20" fill="#4a5ad0" stroke="none" stroke-width="1" opacity="0.75"/>
<line x1="288.90" y1="567.50" x2="292.70" y2="567.50" stroke="#2030a0" stroke-width="0.9" />
<line x1="280.50" y1="571.40" x2="280.50" y2="577.20" stroke="#ff0000" stroke-width="1.1" />
<line x1="280.50" y1="577.20" x2="280.50" y2="581.90" stroke="#800040" stroke-width="1" />
<line x1="285.50" y1="571.40" x2="285.50" y2="577.20" stroke="#ff0000" stroke-width="1.1" />
<line x1="285.50" y1="577.20" x2="285.50" y2="581.90" stroke="#800040" stroke-width="1" />
<line x1="291.50" y1="571.40" x2="291.50" y2="577.20" stroke="#ff0000" stroke-width="1.1" />
<line x1="291.50" y1="577.20" x2="291.50" y2="581.90" stroke="#800040" stroke-width="1" />
<rect x="276.90" y="575.60" width="2.60" height="2.20" fill="#7a6a50" stroke="none" stroke-width="1" opacity="0.8"/>
<rect x="281.80" y="575.60" width="2.50" height="2.20" fill="#4a5ad0" stroke="none" stroke-width="1" opacity="0.7"/>
<line x1="287.50" y1="576.50" x2="290.50" y2="576.50" stroke="#101010" stroke-width="0.9" />
<line x1="280.60" y1="581.50" x2="291.30" y2="581.50" stroke="#800040" stroke-width="1" />
<circle cx="285.50" cy="581.6" r="1.5" fill="#ff00ff"/>
<line x1="285.50" y1="581.40" x2="285.50" y2="587.20" stroke="#800040" stroke-width="1" />
<line x1="279.70" y1="587.40" x2="291.30" y2="587.40" stroke="#ff0000" stroke-width="1.5" />
<line x1="282.10" y1="589.20" x2="288.90" y2="589.20" stroke="#ff0000" stroke-width="1.2" />
<line x1="284.00" y1="590.50" x2="287.00" y2="590.50" stroke="#ff0000" stroke-width="1.0" />
<text x="285.50" y="595.60" style="font-family:'Liberation Sans',sans-serif;font-size:5.2px;font-weight:bold" fill="#141450" text-anchor="middle" textLength="10.60" lengthAdjust="spacingAndGlyphs"  xml:space="preserve">GND</text>
<text x="244.40" y="490.10" style="font-family:'Liberation Sans',sans-serif;font-size:5.2px;font-weight:bold" fill="#000080" text-anchor="start" textLength="8.60" lengthAdjust="spacingAndGlyphs" stroke="#000080" stroke-width="0.2" xml:space="preserve">H20</text>
<text x="244.40" y="495.90" style="font-family:'Liberation Sans',sans-serif;font-size:5.2px;font-weight:bold" fill="#000080" text-anchor="start" textLength="30.60" lengthAdjust="spacingAndGlyphs" stroke="#000080" stroke-width="0.2" xml:space="preserve">HOLE3D6-1D8</text>
<circle cx="249.5" cy="503.4" r="4.8" fill="#fff" stroke="#0000ff" stroke-width="1.5"/>
<circle cx="249.5" cy="503.4" r="1.7" fill="#fff" stroke="#0000ff" stroke-width="1.1"/>
<line x1="249.50" y1="508.60" x2="249.50" y2="519.60" stroke="#ff0000" stroke-width="1" />
<line x1="243.70" y1="519.80" x2="255.30" y2="519.80" stroke="#ff0000" stroke-width="1.5" />
<line x1="246.10" y1="521.60" x2="252.90" y2="521.60" stroke="#ff0000" stroke-width="1.2" />
<line x1="248.00" y1="523.50" x2="251.00" y2="523.50" stroke="#ff0000" stroke-width="1.0" />
<text x="249.50" y="528.00" style="font-family:'Liberation Sans',sans-serif;font-size:5.2px;font-weight:bold" fill="#141450" text-anchor="middle" textLength="10.60" lengthAdjust="spacingAndGlyphs"  xml:space="preserve">GND</text>
<text x="280.90" y="490.10" style="font-family:'Liberation Sans',sans-serif;font-size:5.2px;font-weight:bold" fill="#000080" text-anchor="start" textLength="8.60" lengthAdjust="spacingAndGlyphs" stroke="#000080" stroke-width="0.2" xml:space="preserve">H21</text>
<text x="280.90" y="495.90" style="font-family:'Liberation Sans',sans-serif;font-size:5.2px;font-weight:bold" fill="#000080" text-anchor="start" textLength="30.60" lengthAdjust="spacingAndGlyphs" stroke="#000080" stroke-width="0.2" xml:space="preserve">HOLE3D6-1D8</text>
<circle cx="286" cy="503.4" r="4.8" fill="#fff" stroke="#0000ff" stroke-width="1.5"/>
<circle cx="286" cy="503.4" r="1.7" fill="#fff" stroke="#0000ff" stroke-width="1.1"/>
<line x1="286.50" y1="508.60" x2="286.50" y2="519.60" stroke="#ff0000" stroke-width="1" />
<line x1="280.20" y1="519.80" x2="291.80" y2="519.80" stroke="#ff0000" stroke-width="1.5" />
<line x1="282.60" y1="521.60" x2="289.40" y2="521.60" stroke="#ff0000" stroke-width="1.2" />
<line x1="284.50" y1="523.50" x2="287.50" y2="523.50" stroke="#ff0000" stroke-width="1.0" />
<text x="286.00" y="528.00" style="font-family:'Liberation Sans',sans-serif;font-size:5.2px;font-weight:bold" fill="#141450" text-anchor="middle" textLength="10.60" lengthAdjust="spacingAndGlyphs"  xml:space="preserve">GND</text>
<text x="322.50" y="490.10" style="font-family:'Liberation Sans',sans-serif;font-size:5.2px;font-weight:bold" fill="#000080" text-anchor="start" textLength="8.60" lengthAdjust="spacingAndGlyphs" stroke="#000080" stroke-width="0.2" xml:space="preserve">H22</text>
<text x="322.50" y="495.90" style="font-family:'Liberation Sans',sans-serif;font-size:5.2px;font-weight:bold" fill="#000080" text-anchor="start" textLength="30.60" lengthAdjust="spacingAndGlyphs" stroke="#000080" stroke-width="0.2" xml:space="preserve">HOLE3D6-1D8</text>
<circle cx="327.6" cy="503.4" r="4.8" fill="#fff" stroke="#0000ff" stroke-width="1.5"/>
<circle cx="327.6" cy="503.4" r="1.7" fill="#fff" stroke="#0000ff" stroke-width="1.1"/>
<line x1="327.50" y1="508.60" x2="327.50" y2="519.60" stroke="#ff0000" stroke-width="1" />
<line x1="321.80" y1="519.80" x2="333.40" y2="519.80" stroke="#ff0000" stroke-width="1.5" />
<line x1="324.20" y1="521.60" x2="331.00" y2="521.60" stroke="#ff0000" stroke-width="1.2" />
<line x1="326.10" y1="523.50" x2="329.10" y2="523.50" stroke="#ff0000" stroke-width="1.0" />
<text x="327.60" y="528.00" style="font-family:'Liberation Sans',sans-serif;font-size:5.2px;font-weight:bold" fill="#141450" text-anchor="middle" textLength="10.60" lengthAdjust="spacingAndGlyphs"  xml:space="preserve">GND</text>
<text x="359.10" y="490.10" style="font-family:'Liberation Sans',sans-serif;font-size:5.2px;font-weight:bold" fill="#000080" text-anchor="start" textLength="8.60" lengthAdjust="spacingAndGlyphs" stroke="#000080" stroke-width="0.2" xml:space="preserve">H23</text>
<text x="359.10" y="495.90" style="font-family:'Liberation Sans',sans-serif;font-size:5.2px;font-weight:bold" fill="#000080" text-anchor="start" textLength="30.60" lengthAdjust="spacingAndGlyphs" stroke="#000080" stroke-width="0.2" xml:space="preserve">HOLE3D6-1D8</text>
<circle cx="364.2" cy="503.4" r="4.8" fill="#fff" stroke="#0000ff" stroke-width="1.5"/>
<circle cx="364.2" cy="503.4" r="1.7" fill="#fff" stroke="#0000ff" stroke-width="1.1"/>
<line x1="364.50" y1="508.60" x2="364.50" y2="519.60" stroke="#ff0000" stroke-width="1" />
<line x1="358.40" y1="519.80" x2="370.00" y2="519.80" stroke="#ff0000" stroke-width="1.5" />
<line x1="360.80" y1="521.60" x2="367.60" y2="521.60" stroke="#ff0000" stroke-width="1.2" />
<line x1="362.70" y1="523.50" x2="365.70" y2="523.50" stroke="#ff0000" stroke-width="1.0" />
<text x="364.20" y="528.00" style="font-family:'Liberation Sans',sans-serif;font-size:5.2px;font-weight:bold" fill="#141450" text-anchor="middle" textLength="10.60" lengthAdjust="spacingAndGlyphs"  xml:space="preserve">GND</text>
<text x="395.60" y="490.10" style="font-family:'Liberation Sans',sans-serif;font-size:5.2px;font-weight:bold" fill="#000080" text-anchor="start" textLength="8.60" lengthAdjust="spacingAndGlyphs" stroke="#000080" stroke-width="0.2" xml:space="preserve">H24</text>
<text x="395.60" y="495.90" style="font-family:'Liberation Sans',sans-serif;font-size:5.2px;font-weight:bold" fill="#000080" text-anchor="start" textLength="30.60" lengthAdjust="spacingAndGlyphs" stroke="#000080" stroke-width="0.2" xml:space="preserve">HOLE3D6-1D8</text>
<circle cx="400.7" cy="503.4" r="4.8" fill="#fff" stroke="#0000ff" stroke-width="1.5"/>
<circle cx="400.7" cy="503.4" r="1.7" fill="#fff" stroke="#0000ff" stroke-width="1.1"/>
<line x1="400.50" y1="508.60" x2="400.50" y2="519.60" stroke="#ff0000" stroke-width="1" />
<line x1="394.90" y1="519.80" x2="406.50" y2="519.80" stroke="#ff0000" stroke-width="1.5" />
<line x1="397.30" y1="521.60" x2="404.10" y2="521.60" stroke="#ff0000" stroke-width="1.2" />
<line x1="399.20" y1="523.50" x2="402.20" y2="523.50" stroke="#ff0000" stroke-width="1.0" />
<text x="400.70" y="528.00" style="font-family:'Liberation Sans',sans-serif;font-size:5.2px;font-weight:bold" fill="#141450" text-anchor="middle" textLength="10.60" lengthAdjust="spacingAndGlyphs"  xml:space="preserve">GND</text>
<line x1="684.00" y1="555.50" x2="862.70" y2="555.50" stroke="#000" stroke-width="1" />
<line x1="684.00" y1="570.50" x2="862.70" y2="570.50" stroke="#000" stroke-width="1" />
<line x1="674.50" y1="586.50" x2="862.70" y2="586.50" stroke="#000" stroke-width="1" />
<line x1="674.50" y1="602.50" x2="862.70" y2="602.50" stroke="#000" stroke-width="1" />
<line x1="773.50" y1="570.00" x2="773.50" y2="607.50" stroke="#000" stroke-width="1" />
<line x1="674.50" y1="586.20" x2="674.50" y2="607.50" stroke="#000" stroke-width="1" />
<line x1="690.50" y1="586.20" x2="690.50" y2="602.20" stroke="#000" stroke-width="1" />
<line x1="846.50" y1="586.20" x2="846.50" y2="602.20" stroke="#000" stroke-width="1" />
<text x="684.20" y="574.80" style="font-family:'Liberation Sans',sans-serif;font-size:5px;font-weight:bold" fill="#06062a" text-anchor="start" textLength="8.20" lengthAdjust="spacingAndGlyphs" stroke="#06062a" stroke-width="0.22" xml:space="preserve">ject</text>
<text x="684.50" y="579.60" style="font-family:'Liberation Sans',sans-serif;font-size:5px;font-weight:bold" fill="#06062a" text-anchor="start" textLength="25.10" lengthAdjust="spacingAndGlyphs" stroke="#06062a" stroke-width="0.22" xml:space="preserve">SM9-D7018</text>
<text x="778.90" y="574.80" style="font-family:'Liberation Sans',sans-serif;font-size:5px;font-weight:bold" fill="#06062a" text-anchor="start" textLength="37.90" lengthAdjust="spacingAndGlyphs" stroke="#06062a" stroke-width="0.22" xml:space="preserve">Document Number</text>
<text x="778.90" y="579.60" style="font-family:'Liberation Sans',sans-serif;font-size:5px;font-weight:bold" fill="#06062a" text-anchor="start" textLength="13.60" lengthAdjust="spacingAndGlyphs" stroke="#06062a" stroke-width="0.22" xml:space="preserve">8574Y</text>
<text x="674.50" y="590.80" style="font-family:'Liberation Sans',sans-serif;font-size:5px;font-weight:bold" fill="#06062a" text-anchor="start" textLength="8.60" lengthAdjust="spacingAndGlyphs" stroke="#06062a" stroke-width="0.22" xml:space="preserve">Size</text>
<text x="679.80" y="596.00" style="font-family:'Liberation Sans',sans-serif;font-size:5px;font-weight:bold" fill="#06062a" text-anchor="start" textLength="5.60" lengthAdjust="spacingAndGlyphs" stroke="#06062a" stroke-width="0.22" xml:space="preserve">A3</text>
<text x="695.50" y="590.80" style="font-family:'Liberation Sans',sans-serif;font-size:5px;font-weight:bold" fill="#06062a" text-anchor="start" textLength="9.00" lengthAdjust="spacingAndGlyphs" stroke="#06062a" stroke-width="0.22" xml:space="preserve">Title</text>
<text x="700.30" y="596.00" style="font-family:'Liberation Sans',sans-serif;font-size:5px;font-weight:bold" fill="#06062a" text-anchor="start" textLength="23.10" lengthAdjust="spacingAndGlyphs" stroke="#06062a" stroke-width="0.22" xml:space="preserve">01 - INDEX</text>
<text x="778.90" y="590.80" style="font-family:'Liberation Sans',sans-serif;font-size:5px;font-weight:bold" fill="#06062a" text-anchor="start" textLength="17.90" lengthAdjust="spacingAndGlyphs" stroke="#06062a" stroke-width="0.22" xml:space="preserve">Designer</text>
<text x="778.90" y="596.00" style="font-family:'Liberation Sans',sans-serif;font-size:5px;font-weight:bold" fill="#06062a" text-anchor="start" textLength="16.40" lengthAdjust="spacingAndGlyphs" stroke="#06062a" stroke-width="0.22" xml:space="preserve">Li Xihui</text>
<text x="847.30" y="590.80" style="font-family:'Liberation Sans',sans-serif;font-size:5px;font-weight:bold" fill="#06062a" text-anchor="start" textLength="7.60" lengthAdjust="spacingAndGlyphs" stroke="#06062a" stroke-width="0.22" xml:space="preserve">Rev</text>
<text x="852.50" y="596.00" style="font-family:'Liberation Sans',sans-serif;font-size:5px;font-weight:bold" fill="#06062a" text-anchor="start" textLength="5.60" lengthAdjust="spacingAndGlyphs" stroke="#06062a" stroke-width="0.22" xml:space="preserve">1.0</text>
<text x="674.50" y="606.10" style="font-family:'Liberation Sans',sans-serif;font-size:5px;font-weight:bold" fill="#06062a" text-anchor="start" textLength="10.60" lengthAdjust="spacingAndGlyphs" stroke="#06062a" stroke-width="0.22" xml:space="preserve">Date:</text>
<text x="701.90" y="606.10" style="font-family:'Liberation Sans',sans-serif;font-size:5px;font-weight:bold" fill="#06062a" text-anchor="start" textLength="50.10" lengthAdjust="spacingAndGlyphs" stroke="#06062a" stroke-width="0.22" xml:space="preserve">Thursday, June 20, 2013</text>
<text x="778.90" y="606.10" style="font-family:'Liberation Sans',sans-serif;font-size:5px;font-weight:bold" fill="#06062a" text-anchor="start" textLength="11.70" lengthAdjust="spacingAndGlyphs" stroke="#06062a" stroke-width="0.22" xml:space="preserve">Sheet</text>
<text x="806.60" y="606.10" style="font-family:'Liberation Sans',sans-serif;font-size:5px;font-weight:bold" fill="#06062a" text-anchor="start" textLength="2.40" lengthAdjust="spacingAndGlyphs" stroke="#06062a" stroke-width="0.22" xml:space="preserve">1</text>
<text x="821.60" y="606.10" style="font-family:'Liberation Sans',sans-serif;font-size:5px;font-weight:bold" fill="#06062a" text-anchor="start" textLength="4.20" lengthAdjust="spacingAndGlyphs" stroke="#06062a" stroke-width="0.22" xml:space="preserve">of</text>
<text x="837.50" y="606.10" style="font-family:'Liberation Sans',sans-serif;font-size:5px;font-weight:bold" fill="#06062a" text-anchor="start" textLength="5.20" lengthAdjust="spacingAndGlyphs" stroke="#06062a" stroke-width="0.22" xml:space="preserve">13</text>
<path transform="translate(202.80,22.40) scale(0.900)" d="M.4 2.4H3.6 M2 .5V7.7 M2 2.6L.4 5.4 M2 3L3.4 4.4 M4.4 1.4H7.2 M3.9 3.2H7.7 M5.8 3.2V7.5L5.2 7.1 M4.6 4.6L4 6.6 M7 4.6L7.7 6.6" fill="none" stroke="#333" stroke-width="1.00" stroke-linecap="square"/>
<path transform="translate(210.50,22.40) scale(0.900)" d="M.8 .8H3.6V3H.8Z M.8 1.9H3.6 M.3 4H4 M2.2 4V6.5 M2.2 5.2H3.6 M1.2 4.8L.4 7.2 M.8 6.4L2.6 7.5H7.8 M4.4 .8H7.8 M6 .8L5.6 2 M4.8 2H7.4V5.6H4.8Z M6.1 2.6V5 M5.8 5.8L4.6 7 M6.6 5.8L7.6 6.9" fill="none" stroke="#333" stroke-width="1.00" stroke-linecap="square"/>
<path transform="translate(218.20,22.40) scale(0.900)" d="M6 .5L2 7.5" fill="none" stroke="#333" stroke-width="1.00" stroke-linecap="square"/>
<path transform="translate(225.90,22.40) scale(0.900)" d="M.4 2.4H3.2 M1.8 .6V7.4L1 7 M.4 5.2L3.2 4.2 M3.6 1.4H7.8 M4.8 .5V2.4 M6.6 .5V2.4 M4 3.2H7.6V7.4H4Z M4 5.3H7.6 M5.8 3.2V7.4" fill="none" stroke="#333" stroke-width="1.00" stroke-linecap="square"/>
<path transform="translate(233.60,22.40) scale(0.900)" d="M1 1L1.6 1.8 M.5 3.2H1.8V6L.6 7.2 M1.2 6.5L3 7.4H7.8 M3 2.4H7.6 M5.2 .5V6.4 M5.2 2.6L3.2 5.6 M5.2 2.6L7.6 5.6 M6.4 .7L7 1.4" fill="none" stroke="#333" stroke-width="1.00" stroke-linecap="square"/>
<path transform="translate(407.30,22.40) scale(0.925)" d="M.8 1H7.2 M4 1L3.4 2.4 M1.6 2.4H6.4V6H1.6Z M4 3V5L1.2 7.6 M4.6 6.2L7 7.6" fill="none" stroke="#333" stroke-width="0.97" stroke-linecap="square"/>
<path transform="translate(415.30,22.40) scale(0.925)" d="M.4 1.4H3.6 M2 1.4L.5 4.8 M1.2 4H3.2V6.8H1.2Z M4.4 1H7L6.8 3.4 M5 1L4.8 3.6H7.6L7.4 7.4L6.6 7 M4.2 5.4H7" fill="none" stroke="#333" stroke-width="0.97" stroke-linecap="square"/>
<path transform="translate(766.30,561.30) scale(0.825)" d="M.5 1.5H7.5 M3.2 1.5L2.5 5L.8 7.5 M2.8 3.8H6.5L6.2 7.2L5 6.8" fill="none" stroke="#000" stroke-width="1.27" stroke-linecap="square"/>
<path transform="translate(772.65,561.30) scale(0.825)" d="M3.5 .8L1 1.5 M.5 3H4.2 M2.4 1.2V7.8 M2.4 3.2L.5 6 M2.4 3.2L4.2 5.5 M5.5 1.5V5.5 M7.2 .5V7.5L6.4 7" fill="none" stroke="#000" stroke-width="1.27" stroke-linecap="square"/>
<path transform="translate(779.00,561.30) scale(0.825)" d="M1 1L1.6 1.8 M.5 3.2H1.8V6L.6 7.2 M1.2 6.5L3 7.4H7.8 M3 2.5H7.5 M5.2 .5V2.5L3.2 6 M5.2 2.5L7.5 6" fill="none" stroke="#000" stroke-width="1.27" stroke-linecap="square"/>
<path transform="translate(785.35,561.30) scale(0.825)" d="M6.5 .5Q3.5 4 6.5 7.5" fill="none" stroke="#000" stroke-width="1.27" stroke-linecap="square"/>
<path transform="translate(791.70,561.30) scale(0.825)" d="M1 1H7.5 M1.2 1V5L.4 7.6 M2.5 2.2H7.2 M3.2 3H6.6V5H3.2Z M3.2 4H6.6 M4.5 5.2L2.5 7.6 M3.8 5.8H6.2L3.5 7.8 M4.2 6.4L7.5 7.7" fill="none" stroke="#000" stroke-width="1.27" stroke-linecap="square"/>
<path transform="translate(798.05,561.30) scale(0.825)" d="M1.5 .6L2.2 1.4 M1.2 2V7.6 M3 1.2H7V7.4L6.2 7" fill="none" stroke="#000" stroke-width="1.27" stroke-linecap="square"/>
<path transform="translate(804.40,561.30) scale(0.825)" d="M1.5 .5Q4.5 4 1.5 7.5" fill="none" stroke="#000" stroke-width="1.27" stroke-linecap="square"/>
<path transform="translate(810.75,561.30) scale(0.825)" d="M.4 2.4H3.2 M1.8 .6V7.4L1 7 M.4 5.2L3.2 4.2 M3.6 2H7.6 M5.6 .6V3.4 M4 3.6H7L4 7.6 M4.6 4.6L7.8 7.6" fill="none" stroke="#000" stroke-width="1.27" stroke-linecap="square"/>
<path transform="translate(817.10,561.30) scale(0.825)" d="M.6 2.4H7.4 M4 .5V7.7 M4 2.6L.6 6.5 M4 2.6L7.6 6.5 M5.6 .8L6.4 1.6" fill="none" stroke="#000" stroke-width="1.27" stroke-linecap="square"/>
<path transform="translate(823.45,561.30) scale(0.825)" d="M1 2.2H7V5.4H1Z M4 .4V7.8" fill="none" stroke="#000" stroke-width="1.27" stroke-linecap="square"/>
<path transform="translate(829.80,561.30) scale(0.825)" d="M1.2 3.5L.6 5.8 M2.6 2.6L2.8 6.6L5.8 6.8L6 5.6 M4 1.4L4.6 2.6 M6.4 2.6L7.4 4.4" fill="none" stroke="#000" stroke-width="1.27" stroke-linecap="square"/>
<g filter="url(#lblur)" clip-path="url(#logoclip)">
<path transform="translate(678.60,557.40) scale(1.363)" d="M.5 1.5H7.5 M3.2 1.5L2.5 5L.8 7.5 M2.8 3.8H6.5L6.2 7.2L5 6.8" fill="none" stroke="#e23a3a" stroke-width="1.28" stroke-linecap="square"/>
<path transform="translate(690.00,557.40) scale(1.363)" d="M3.5 .8L1 1.5 M.5 3H4.2 M2.4 1.2V7.8 M2.4 3.2L.5 6 M2.4 3.2L4.2 5.5 M5.5 1.5V5.5 M7.2 .5V7.5L6.4 7" fill="none" stroke="#e23a3a" stroke-width="1.28" stroke-linecap="square"/>
<path transform="translate(701.40,557.40) scale(1.363)" d="M1 1L1.6 1.8 M.5 3.2H1.8V6L.6 7.2 M1.2 6.5L3 7.4H7.8 M3 2.5H7.5 M5.2 .5V2.5L3.2 6 M5.2 2.5L7.5 6" fill="none" stroke="#e23a3a" stroke-width="1.28" stroke-linecap="square"/>
<text x="713.80" y="568.30" style="font-family:'Liberation Sans',sans-serif;font-size:16px;font-weight:bold" fill="#e23a3a" text-anchor="start" textLength="41.70" lengthAdjust="spacingAndGlyphs" stroke="#e23a3a" stroke-width="0.45" xml:space="preserve">malata</text>
</g>
<g filter="url(#pblur)">
<rect x="447.5" y="424" width="106.5" height="158.4" rx="9" fill="#0a0a0a" stroke="#5a5a5a" stroke-width="0.9"/>
<path d="M448 571 Q448.4 581.6 459 582" fill="none" stroke="#b8b8b8" stroke-width="1.2"/>
<path d="M553.6 571 Q553.2 581.6 543 582" fill="none" stroke="#9a9a9a" stroke-width="1.1"/>
<path d="M553.6 436 Q553.4 425 544 424.4" fill="none" stroke="#888" stroke-width="0.9"/>
<g clip-path="url(#fclip)">
<rect x="447.5" y="424" width="10.6" height="140" fill="url(#bezl)"/>
</g>
<rect x="458.1" y="440" width="85.9" height="122.4" fill="url(#wall)"/>
<rect x="465.50" y="440.00" width="3.00" height="122.40" fill="#7fe08f" stroke="none" stroke-width="1" opacity="0.28"/>
<rect x="472.00" y="440.00" width="3.00" height="122.40" fill="#0a3020" stroke="none" stroke-width="1" opacity="0.22"/>
<rect x="479.50" y="440.00" width="3.00" height="122.40" fill="#8ff0e0" stroke="none" stroke-width="1" opacity="0.2"/>
<rect x="486.50" y="440.00" width="3.00" height="122.40" fill="#0a2040" stroke="none" stroke-width="1" opacity="0.18"/>
<rect x="495.50" y="440.00" width="3.00" height="122.40" fill="#8fa8ff" stroke="none" stroke-width="1" opacity="0.2"/>
<rect x="510.00" y="440.00" width="3.00" height="122.40" fill="#30101a" stroke="none" stroke-width="1" opacity="0.2"/>
<rect x="519.50" y="440.00" width="3.00" height="122.40" fill="#ff9a60" stroke="none" stroke-width="1" opacity="0.22"/>
<rect x="529.50" y="440.00" width="3.00" height="122.40" fill="#ffb070" stroke="none" stroke-width="1" opacity="0.15"/>
<rect x="458.1" y="440" width="85.9" height="122.4" fill="url(#walld)"/>
<rect x="458.10" y="562.40" width="85.90" height="6.80" fill="#050505" stroke="none" stroke-width="1" />
<g clip-path="url(#fclip)"><path d="M447.5 424 L505 424 L489 474 L447.5 474 Z" fill="url(#glare)"/></g>
<path d="M442.6 424.8 L455.6 424.2 L453.6 433.6 L441.2 432.4 Z" fill="#5a7a9a" stroke="#333" stroke-width="0.7"/>
<path d="M444 427 L453.6 426.4 L452.6 431 L443.4 430.4 Z" fill="#9ac0d8"/>
<path d="M444 429.6 L452.8 429 L452.6 431 L443.4 430.4 Z" fill="#5a8a3a"/>
<rect x="456.50" y="424.90" width="20.00" height="1.70" fill="#a03030" stroke="none" stroke-width="1" opacity="0.75"/>
<rect x="477.50" y="424.90" width="14.50" height="1.70" fill="#4050a0" stroke="none" stroke-width="1" opacity="0.7"/>
<rect x="456.50" y="430.80" width="30.00" height="1.80" fill="#3040a0" stroke="none" stroke-width="1" opacity="0.75"/>
<rect x="460.50" y="441.60" width="3.00" height="2.60" fill="#ddd" stroke="none" stroke-width="1" opacity="0.7"/>
<rect x="475.50" y="441.40" width="1.40" height="3.00" fill="#eee" stroke="none" stroke-width="1" opacity="0.8"/>
<rect x="538.20" y="441.80" width="3.00" height="2.20" fill="#ccc" stroke="none" stroke-width="1" opacity="0.6"/>
<circle cx="516" cy="443.5" r="1.2" fill="#ffd0b0" opacity="0.5"/><circle cx="531" cy="443.8" r="1.2" fill="#ffd0b0" opacity="0.5"/><circle cx="500.5" cy="457" r="3.2" fill="none" stroke="#aab" stroke-width="0.5" opacity="0.5"/>
<rect x="461.20" y="461.00" width="38.50" height="7.20" fill="#2b2b2b" stroke="none" stroke-width="1" />
<rect x="463.00" y="463.00" width="18.00" height="1.20" fill="#ddd" stroke="none" stroke-width="1" opacity="0.75"/>
<rect x="463.00" y="465.40" width="8.00" height="0.90" fill="#aaa" stroke="none" stroke-width="1" opacity="0.6"/>
<path d="M487 463 l2.6 1.6 l-2.6 1.6z" fill="#eee"/>
<rect x="495.00" y="464.00" width="2.60" height="1.30" fill="#eee" stroke="none" stroke-width="1" />
<rect x="492.00" y="461.00" width="0.60" height="7.20" fill="#111" stroke="none" stroke-width="1" />
<rect x="512.20" y="461.00" width="28.60" height="6.80" fill="#252525" stroke="none" stroke-width="1" />
<circle cx="515.6" cy="464.4" r="2.3" fill="#f2c21a"/>
<text x="520.60" y="467.00" style="font-family:'Liberation Sans',sans-serif;font-size:6.5px;font-weight:normal" fill="#f4f4f4" text-anchor="start" textLength="8.40" lengthAdjust="spacingAndGlyphs"  xml:space="preserve">16°</text>
<rect x="531.00" y="462.40" width="5.00" height="0.90" fill="#ccc" stroke="none" stroke-width="1" opacity="0.7"/>
<rect x="531.00" y="464.30" width="3.40" height="0.80" fill="#aaa" stroke="none" stroke-width="1" opacity="0.7"/>
<rect x="531.00" y="466.00" width="4.00" height="0.80" fill="#aaa" stroke="none" stroke-width="1" opacity="0.6"/>
<rect x="461.20" y="473.10" width="38.50" height="33.10" fill="#e9eef0" stroke="none" stroke-width="1" opacity="0.93"/>
<rect x="461.20" y="473.10" width="38.50" height="2.60" fill="#dfe6e8" stroke="none" stroke-width="1" />
<rect x="462.40" y="473.80" width="1.80" height="1.20" fill="#d03030" stroke="none" stroke-width="1" />
<rect x="465.00" y="474.00" width="6.00" height="0.90" fill="#667" stroke="none" stroke-width="1" />
<rect x="461.20" y="475.70" width="38.50" height="0.80" fill="#5ab0c0" stroke="none" stroke-width="1" opacity="0.8"/>
<rect x="463.20" y="478.60" width="12.00" height="1.00" fill="#556" stroke="none" stroke-width="1" />
<rect x="495.00" y="478.60" width="3.00" height="0.80" fill="#99a" stroke="none" stroke-width="1" />
<rect x="463.20" y="480.50" width="33.00" height="0.80" fill="#9aa2a8" stroke="none" stroke-width="1" />
<rect x="463.20" y="482.10" width="30.00" height="0.80" fill="#a8b0b6" stroke="none" stroke-width="1" />
<rect x="463.20" y="486.20" width="12.00" height="1.00" fill="#556" stroke="none" stroke-width="1" />
<rect x="495.00" y="486.20" width="3.00" height="0.80" fill="#99a" stroke="none" stroke-width="1" />
<rect x="463.20" y="488.10" width="33.00" height="0.80" fill="#9aa2a8" stroke="none" stroke-width="1" />
<rect x="463.20" y="489.70" width="30.00" height="0.80" fill="#a8b0b6" stroke="none" stroke-width="1" />
<rect x="463.20" y="493.20" width="12.00" height="1.00" fill="#556" stroke="none" stroke-width="1" />
<rect x="495.00" y="493.20" width="3.00" height="0.80" fill="#99a" stroke="none" stroke-width="1" />
<rect x="463.20" y="495.10" width="33.00" height="0.80" fill="#9aa2a8" stroke="none" stroke-width="1" />
<rect x="463.20" y="496.70" width="30.00" height="0.80" fill="#a8b0b6" stroke="none" stroke-width="1" />
<rect x="461.80" y="484.90" width="37.30" height="0.40" fill="#c4ccd0" stroke="none" stroke-width="1" />
<rect x="461.80" y="491.90" width="37.30" height="0.40" fill="#c4ccd0" stroke="none" stroke-width="1" />
<rect x="461.80" y="499.60" width="37.30" height="0.40" fill="#c4ccd0" stroke="none" stroke-width="1" />
<rect x="472.80" y="501.40" width="17.00" height="1.00" fill="#667" stroke="none" stroke-width="1" />
<rect x="472.80" y="503.20" width="17.00" height="0.90" fill="#889" stroke="none" stroke-width="1" />
<rect x="516.10" y="473.50" width="23.20" height="6.00" fill="#5d6a2c" stroke="none" stroke-width="1" />
<rect x="516.10" y="473.50" width="23.20" height="1.60" fill="#8a9a50" stroke="none" stroke-width="1" opacity="0.7"/>
<rect x="515.20" y="479.00" width="24.40" height="6.00" fill="#7f9cc6" stroke="none" stroke-width="1" />
<rect x="515.20" y="479.00" width="24.40" height="0.70" fill="#dfe6ee" stroke="none" stroke-width="1" />
<rect x="514.80" y="484.00" width="24.20" height="4.20" fill="#4c5a22" stroke="none" stroke-width="1" />
<rect x="520.00" y="485.00" width="12.00" height="2.00" fill="#8a5a2a" stroke="none" stroke-width="1" opacity="0.8"/>
<rect x="513.20" y="488.20" width="24.20" height="17.80" fill="#dfe4ea" stroke="none" stroke-width="1" />
<rect x="513.90" y="488.90" width="22.80" height="6.20" fill="#a9bbd6" stroke="none" stroke-width="1" />
<rect x="513.90" y="495.10" width="22.80" height="2.40" fill="#c9b6b8" stroke="none" stroke-width="1" />
<rect x="513.90" y="497.50" width="22.80" height="1.60" fill="#3c4658" stroke="none" stroke-width="1" />
<rect x="513.90" y="499.10" width="22.80" height="6.20" fill="#5c7cae" stroke="none" stroke-width="1" />
<rect x="529.60" y="492.00" width="0.50" height="6.40" fill="#334" stroke="none" stroke-width="1" />
<rect x="527.00" y="498.00" width="6.00" height="1.20" fill="#223" stroke="none" stroke-width="1" />
<rect x="461.25" y="524.25" width="7.3" height="7.3" rx="1.2" fill="#d8201c"/>
<rect x="463.07" y="526.07" width="3.65" height="3.65" rx="0.8" fill="#f6e0e0"/>
<rect x="471.55" y="524.25" width="7.3" height="7.3" rx="1.2" fill="#3a3a3e"/>
<rect x="473.38" y="526.07" width="3.65" height="3.65" rx="0.8" fill="#777"/>
<rect x="481.65" y="524.25" width="7.3" height="7.3" rx="1.2" fill="#3fb53a"/>
<rect x="483.48" y="526.07" width="3.65" height="3.65" rx="0.8" fill="#2a3a2a"/>
<circle cx="495.7" cy="527.9" r="3.65" fill="#d84a44"/>
<rect x="493.88" y="526.07" width="3.65" height="3.65" rx="0.8" fill="#f0eaea"/>
<circle cx="506" cy="527.9" r="3.65" fill="#4cc04a"/>
<rect x="504.18" y="526.07" width="3.65" height="3.65" rx="0.8" fill="#e8f8e8"/>
<rect x="512.65" y="524.25" width="7.3" height="7.3" rx="1.2" fill="#b82a24"/>
<rect x="514.47" y="526.07" width="3.65" height="3.65" rx="0.8" fill="#e8b02a"/>
<rect x="522.85" y="524.25" width="7.3" height="7.3" rx="1.2" fill="#e8e2e2"/>
<rect x="524.67" y="526.07" width="3.65" height="3.65" rx="0.8" fill="#c8302c"/>
<rect x="532.85" y="524.25" width="7.3" height="7.3" rx="1.2" fill="#eef0f2"/>
<rect x="534.67" y="526.07" width="3.65" height="3.65" rx="0.8" fill="#4a90d8"/>
<circle cx="464.9" cy="540.8" r="3.50" fill="#2a8cd4"/>
<rect x="463.15" y="539.05" width="3.50" height="3.50" rx="0.8" fill="#5ab0e8"/>
<circle cx="475.2" cy="540.8" r="3.50" fill="#3a6ac8"/>
<rect x="473.45" y="539.05" width="3.50" height="3.50" rx="0.8" fill="#f0e8e8"/>
<rect x="481.80" y="537.30" width="7.0" height="7.0" rx="1.2" fill="#f2cc3a"/>
<rect x="483.55" y="539.05" width="3.50" height="3.50" rx="0.8" fill="#f8f4ea"/>
<rect x="492.20" y="537.30" width="7.0" height="7.0" rx="1.2" fill="#d8e0b0"/>
<rect x="493.95" y="539.05" width="3.50" height="3.50" rx="0.8" fill="#8ac04a"/>
<circle cx="506" cy="540.8" r="3.50" fill="#3eb83a"/>
<rect x="504.25" y="539.05" width="3.50" height="3.50" rx="0.8" fill="#e0f8e0"/>
<rect x="512.80" y="537.30" width="7.0" height="7.0" rx="1.2" fill="#22347a"/>
<rect x="514.55" y="539.05" width="3.50" height="3.50" rx="0.8" fill="#4a68c0"/>
<rect x="523.00" y="537.30" width="7.0" height="7.0" rx="1.2" fill="#6a7078"/>
<rect x="524.75" y="539.05" width="3.50" height="3.50" rx="0.8" fill="#3a78d0"/>
<rect x="533.00" y="537.30" width="7.0" height="7.0" rx="1.2" fill="#3a2a4a"/>
<rect x="534.75" y="539.05" width="3.50" height="3.50" rx="0.8" fill="#7a4aa8"/>
<rect x="462.30" y="532.60" width="5.20" height="0.70" fill="#ccd" stroke="none" stroke-width="1" opacity="0.45"/>
<rect x="462.50" y="545.30" width="4.80" height="0.70" fill="#ccd" stroke="none" stroke-width="1" opacity="0.45"/>
<rect x="472.60" y="532.60" width="5.20" height="0.70" fill="#ccd" stroke="none" stroke-width="1" opacity="0.45"/>
<rect x="472.80" y="545.30" width="4.80" height="0.70" fill="#ccd" stroke="none" stroke-width="1" opacity="0.45"/>
<rect x="482.70" y="532.60" width="5.20" height="0.70" fill="#ccd" stroke="none" stroke-width="1" opacity="0.45"/>
<rect x="482.90" y="545.30" width="4.80" height="0.70" fill="#ccd" stroke="none" stroke-width="1" opacity="0.45"/>
<rect x="493.10" y="532.60" width="5.20" height="0.70" fill="#ccd" stroke="none" stroke-width="1" opacity="0.45"/>
<rect x="493.30" y="545.30" width="4.80" height="0.70" fill="#ccd" stroke="none" stroke-width="1" opacity="0.45"/>
<rect x="503.40" y="532.60" width="5.20" height="0.70" fill="#ccd" stroke="none" stroke-width="1" opacity="0.45"/>
<rect x="503.60" y="545.30" width="4.80" height="0.70" fill="#ccd" stroke="none" stroke-width="1" opacity="0.45"/>
<rect x="513.70" y="532.60" width="5.20" height="0.70" fill="#ccd" stroke="none" stroke-width="1" opacity="0.45"/>
<rect x="513.90" y="545.30" width="4.80" height="0.70" fill="#ccd" stroke="none" stroke-width="1" opacity="0.45"/>
<rect x="523.90" y="532.60" width="5.20" height="0.70" fill="#ccd" stroke="none" stroke-width="1" opacity="0.45"/>
<rect x="524.10" y="545.30" width="4.80" height="0.70" fill="#ccd" stroke="none" stroke-width="1" opacity="0.45"/>
<rect x="533.90" y="532.60" width="5.20" height="0.70" fill="#ccd" stroke="none" stroke-width="1" opacity="0.45"/>
<rect x="534.10" y="545.30" width="4.80" height="0.70" fill="#ccd" stroke="none" stroke-width="1" opacity="0.45"/>
<circle cx="485.4" cy="557.8" r="3.6" fill="none" stroke="#8a9a9a" stroke-width="0.5" opacity="0.5"/><circle cx="531.6" cy="557.6" r="3" fill="none" stroke="#d09060" stroke-width="0.5" opacity="0.55"/>
<rect x="462.00" y="564.60" width="3.40" height="1.80" fill="none" stroke="#8a8a8a" stroke-width="0.6" />
<rect x="470.00" y="564.60" width="3.40" height="1.80" fill="none" stroke="#8a8a8a" stroke-width="0.6" />
<rect x="478.60" y="564.60" width="3.40" height="1.80" fill="none" stroke="#8a8a8a" stroke-width="0.6" />
<text x="528.00" y="567.20" style="font-family:'Liberation Sans',sans-serif;font-size:4.6px;font-weight:bold" fill="#3a8cd8" text-anchor="start" textLength="10.40" lengthAdjust="spacingAndGlyphs"  xml:space="preserve">12:38</text>
<rect x="539.40" y="564.40" width="2.60" height="2.00" fill="#3a8cd8" stroke="none" stroke-width="1" />
<circle cx="514.8" cy="431.4" r="0.8" fill="#333"/>
<rect x="562.9" y="423.8" width="106.2" height="158.6" rx="9" fill="url(#backg)"/>
<rect x="562.9" y="423.8" width="106.2" height="158.6" rx="9" fill="url(#backv)"/>
<path d="M574.1 424.2 H657.6 V431.6 Q657.6 434.6 654.6 434.6 H577.1 Q574.1 434.6 574.1 431.6 Z" fill="#1d1d1d"/>
<circle cx="615.6" cy="430.6" r="2.5" fill="#2c2c2c" stroke="#555" stroke-width="0.6"/><circle cx="616.3" cy="429.9" r="0.9" fill="#9a9a9a"/>
<circle cx="584.6" cy="425" r="0.8" fill="#111"/>
<path d="M605.2 464 Q605 460.6 609 460.4 Q616 459.2 623 460.4 Q627.2 460.6 626.8 464 Q626.6 474.6 616 481 Q605.4 474.6 605.2 464 Z" fill="#86867e"/>
<path d="M607.4 464.6 Q607.2 462.4 610 462.2 Q616 461.4 622 462.2 Q624.8 462.4 624.6 464.6 Q624.2 472.8 616 477.8 Q607.8 472.8 607.4 464.6 Z" fill="#5c5c57" stroke="#a6a69e" stroke-width="0.7"/>
<path d="M611.6 465.4 q1.6 -2.6 4.4 0.4 q2.8 -3 4.4 -0.4 q0.8 2.6 -4.4 5.4 q-5.2 -2.8 -4.4 -5.4z M612 472.6 h8 M611 474.6 h10" fill="none" stroke="#b0b0a8" stroke-width="0.8"/>
<rect x="666.80" y="449.50" width="1.60" height="10.00" fill="#202020" stroke="none" stroke-width="1" />
<rect x="666.80" y="467.00" width="1.60" height="21.00" fill="#202020" stroke="none" stroke-width="1" />
<text x="589.00" y="545.90" style="font-family:'Liberation Sans',sans-serif;font-size:5.4px;font-weight:normal" fill="#a6a6a6" text-anchor="start" textLength="45.40" lengthAdjust="spacingAndGlyphs"  xml:space="preserve">PRESTIGIO MULTIPAD 2</text>
<rect x="635.40" y="541.80" width="7.20" height="1.00" fill="#808080" stroke="none" stroke-width="1" />
<rect x="603.90" y="550.80" width="23.90" height="0.80" fill="#5e5e5e" stroke="none" stroke-width="1" />
<rect x="589.40" y="558.50" width="8.60" height="4.40" fill="none" stroke="#858585" stroke-width="0.7" />
<rect x="600.00" y="558.50" width="7.00" height="4.40" fill="none" stroke="#858585" stroke-width="0.7" />
<rect x="609.00" y="558.50" width="4.20" height="4.40" fill="none" stroke="#858585" stroke-width="0.7" />
<rect x="615.00" y="558.50" width="4.80" height="4.40" fill="none" stroke="#858585" stroke-width="0.7" />
<rect x="622.00" y="558.50" width="4.40" height="4.40" fill="none" stroke="#858585" stroke-width="0.7" />
<rect x="615.80" y="559.30" width="3.20" height="2.80" fill="#7a7a7a" stroke="none" stroke-width="1" />
<rect x="632.40" y="560.40" width="2.20" height="0.80" fill="#5a5a5a" stroke="none" stroke-width="1" />
<rect x="639.00" y="560.40" width="2.00" height="0.80" fill="#555" stroke="none" stroke-width="1" />
<rect x="589.40" y="565.00" width="21.00" height="0.70" fill="#5c5c5c" stroke="none" stroke-width="1" />
<rect x="620.00" y="565.00" width="22.70" height="0.70" fill="#5c5c5c" stroke="none" stroke-width="1" />
<rect x="651.90" y="556.80" width="1.10" height="6.90" fill="#0c0c0c" stroke="none" stroke-width="1" />
<rect x="653.80" y="556.80" width="1.10" height="6.90" fill="#0c0c0c" stroke="none" stroke-width="1" />
<rect x="592.00" y="579.60" width="4.00" height="0.70" fill="#4a4a4a" stroke="none" stroke-width="1" />
<rect x="632.00" y="579.60" width="8.00" height="0.70" fill="#4a4a4a" stroke="none" stroke-width="1" />
<path d="M570 581.6 H662" stroke="#4a4a4a" stroke-width="1.2" opacity="0.8"/>
</g>
</svg>
</body></html>
